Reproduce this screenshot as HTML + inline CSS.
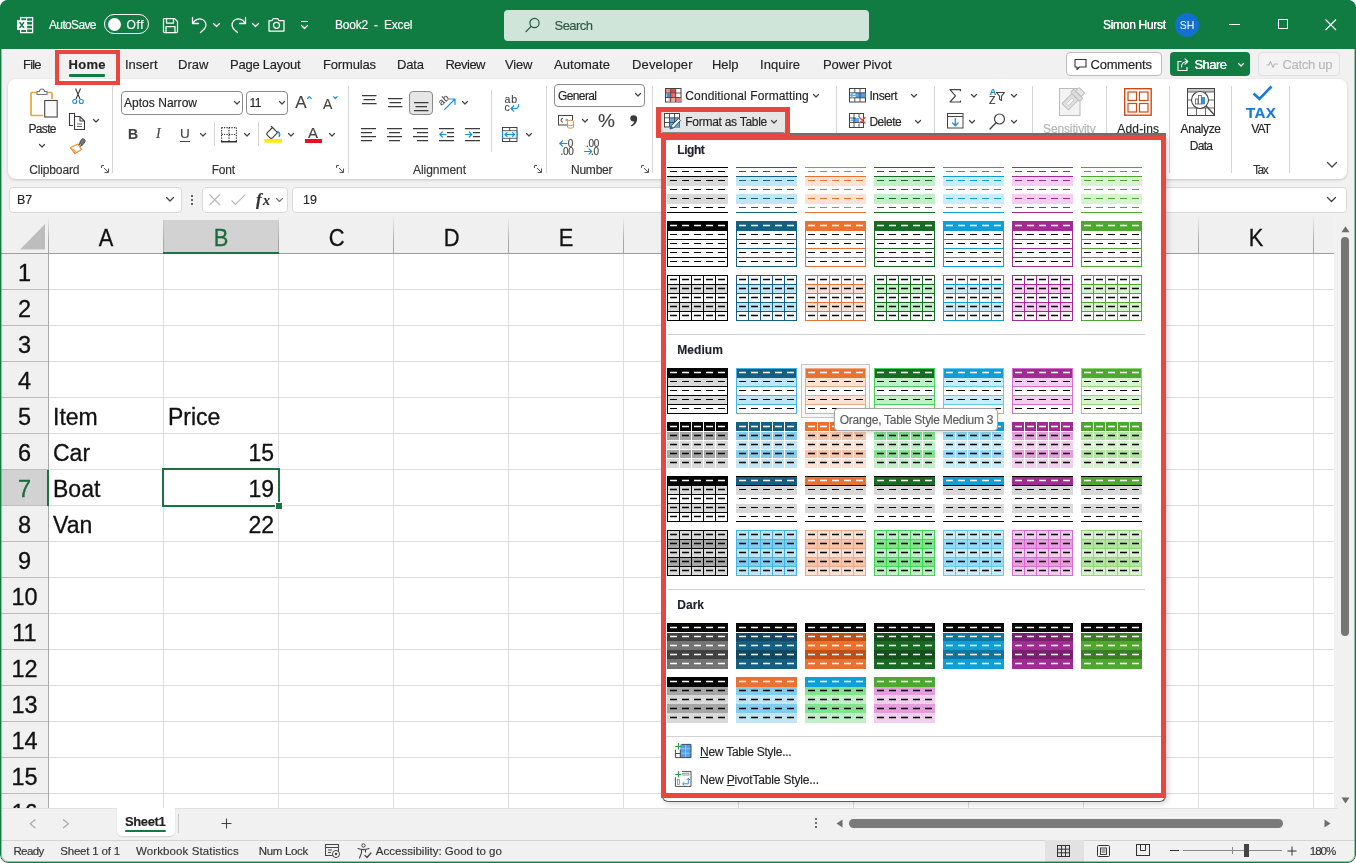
<!DOCTYPE html>
<html><head><meta charset="utf-8"><title>Excel</title><style>
*{box-sizing:border-box;margin:0;padding:0}
html,body{width:1356px;height:863px;overflow:hidden;background:#fff}
body{font-family:"Liberation Sans",sans-serif;color:#242424;position:relative;font-size:13px}
.abs{position:absolute}
#win{position:absolute;left:0;top:0;width:1356px;height:863px;background:#f1f1f1;overflow:hidden;border-radius:8px;will-change:transform}
#title{position:absolute;left:0;top:0;width:1356px;height:49px;background:#107c41}
#frame{position:absolute;left:0;top:0;width:1356px;height:863px;border-radius:8px;border:1px solid #107c41;box-shadow:inset 0 0 0 1px rgba(16,124,65,.4);pointer-events:none}
.t{position:absolute;white-space:nowrap;line-height:1}
.w{color:#fff}
#tabs .t{font-size:13.5px;top:58px;color:#242424}
#ribbon{position:absolute;left:8px;top:79px;width:1339px;height:100px;background:#fff;border-radius:8px;box-shadow:0 1px 3px rgba(0,0,0,.18)}
.gsep{position:absolute;width:1px;background:#d6d6d6;top:86px;height:87px}
.glabel{position:absolute;top:163px;font-size:11.5px;color:#333;white-space:nowrap;line-height:1}
.rt{position:absolute;font-size:12.5px;white-space:nowrap;line-height:1;color:#242424;-webkit-text-stroke:.15px}
.box{position:absolute;border:1px solid #8a8a8a;border-radius:4px;background:#fff}
svg{position:absolute;overflow:visible}
#fbar .box{border-color:#dadada}
#grid{position:absolute;left:1px;top:216px;width:1333px;height:592px;background:#fff;overflow:hidden}
.ch{position:absolute;top:4px;height:33px;width:115px;font-size:24px;text-align:center;line-height:35px;color:#111;-webkit-text-stroke:.3px}.ch span{display:inline-block;transform:scaleX(.91)}.hs{position:absolute;top:1px;width:1px;height:36px;background:linear-gradient(rgba(160,160,160,0),#a6a6a6 70%)}
.rh{position:absolute;left:0;width:47px;height:36px;background:#f0f0f0;font-size:23.5px;text-align:center;line-height:39px;color:#111;border-bottom:1px solid #bcbcbc;-webkit-text-stroke:.3px}
.vl{position:absolute;top:38px;width:1px;height:560px;background:#dedede}
.hl{position:absolute;left:48px;height:1px;width:1300px;background:#dedede}
.cell{position:absolute;font-size:23px;line-height:1;color:#111;white-space:nowrap;-webkit-text-stroke:.3px}
#menu{position:absolute;left:662px;top:136px;width:504px;height:666px;background:#fff;border:1px solid #5a5a5a;border-top:none;border-radius:0 0 6px 6px;box-shadow:2px 2px 6px rgba(0,0,0,.16)}
.red{position:absolute;border:5px solid #e8463f;pointer-events:none}
.mh{position:absolute;left:677px;font-weight:bold;font-size:12px;color:#1f1f2e;line-height:1}
.msep{position:absolute;left:668px;width:477px;height:1px;background:#d2d2d2}
</style></head><body><div id="win">
<div id="title"><svg style="left:16px;top:16px" width="18" height="18" viewBox="0 0 18 18">
<rect x="4.6" y="1.6" width="12" height="15" fill="none" stroke="#fff" stroke-width="1.3"/>
<path d="M4.6 5.4H16.6M4.6 9.1H16.6M4.6 12.8H16.6M10.6 1.6V16.6" stroke="#fff" stroke-width="1.2" fill="none"/>
<rect x="1" y="4.2" width="9.6" height="9.8" fill="#fff"/>
<path d="M3.6 6.3L8 11.9M8 6.3L3.6 11.9" stroke="#107c41" stroke-width="1.5" fill="none"/></svg><div class="rt" style="left:49px;top:19.4px;font-size:12px;letter-spacing:-0.648px;color:#fff;">AutoSave</div><div class="abs" style="left:104px;top:14px;width:45px;height:20px;border:1.3px solid #fff;border-radius:10px"></div><div class="abs" style="left:108px;top:17.5px;width:13px;height:13px;border-radius:7px;background:#fff"></div><div class="rt" style="left:126.5px;top:18.9px;font-size:12px;letter-spacing:0.607px;color:#fff;">Off</div><svg style="left:161.5px;top:16.5px" width="17" height="17" viewBox="0 0 17 17"><path d="M1.5 2.5a1 1 0 0 1 1-1h10l3 3v10a1 1 0 0 1-1 1h-12a1 1 0 0 1-1-1z M4.5 1.5v4.5h7v-4.5 M4 15.5v-6h9v6" fill="none" stroke="#fff" stroke-width="1.25" stroke-linejoin="round"/></svg><svg style="left:191px;top:16px" width="17" height="18" viewBox="0 0 17 18"><path d="M1.5 1.5V7.5H7.5 M2 7C4 3.5 8 2 11.5 3.5c3.5 1.6 4.6 6 2.2 9L9.5 16.5" fill="none" stroke="#fff" stroke-width="1.3" stroke-linecap="round" stroke-linejoin="round"/></svg><svg style="left:212.5px;top:23px" width="7" height="4"><path d="M0.5 0.5L3.5 3.5L6.5 0.5" fill="none" stroke="#fff" stroke-width="1.3" stroke-linecap="round" stroke-linejoin="round"/></svg><svg style="left:230px;top:16px" width="17" height="18" viewBox="0 0 17 18"><path d="M15.5 1.5V7.5H9.5 M15 7C13 3.5 9 2 5.5 3.5c-3.5 1.6-4.6 6-2.2 9L7.5 16.5" fill="none" stroke="#fff" stroke-width="1.3" stroke-linecap="round" stroke-linejoin="round"/></svg><svg style="left:251.5px;top:23px" width="7" height="4"><path d="M0.5 0.5L3.5 3.5L6.5 0.5" fill="none" stroke="#fff" stroke-width="1.3" stroke-linecap="round" stroke-linejoin="round"/></svg><svg style="left:268px;top:17px" width="17" height="15" viewBox="0 0 17 15"><path d="M1 3.5h3l1.2-2h4.5l1.2 2H16v10.5H1z" fill="none" stroke="#fff" stroke-width="1.25" stroke-linejoin="round"/><circle cx="8.5" cy="8.3" r="3" fill="none" stroke="#fff" stroke-width="1.25"/></svg><div class="abs" style="left:301px;top:21px;width:7px;height:1.3px;background:#fff"></div><svg style="left:301px;top:25px" width="7" height="4"><path d="M0.5 0.5L3.5 3.5L6.5 0.5" fill="none" stroke="#fff" stroke-width="1.3" stroke-linecap="round" stroke-linejoin="round"/></svg><div class="rt" style="left:335px;top:19.4px;font-size:12px;letter-spacing:-0.229px;color:#fff;">Book2&nbsp; -&nbsp; Excel</div><div class="abs" style="left:504px;top:10px;width:365px;height:31px;border-radius:4px;background:#cfe5d9"></div><svg style="left:525px;top:17px" width="16" height="16" viewBox="0 0 16 16"><circle cx="9.5" cy="6" r="4.6" fill="none" stroke="#2a5a3f" stroke-width="1.2"/><path d="M6.2 9.4L1 14.6" stroke="#2a5a3f" stroke-width="1.3" stroke-linecap="round"/></svg><div class="rt" style="left:554.5px;top:18.5px;font-size:13px;letter-spacing:-0.538px;color:#2f5a42;">Search</div><div class="rt" style="left:1103px;top:19.4px;font-size:12px;letter-spacing:-0.302px;color:#fff;text-shadow:0 0 .4px #fff;">Simon Hurst</div><div class="abs" style="left:1175px;top:13px;width:24px;height:24px;border-radius:12px;background:#1270d3;color:#fff;font-size:10.5px;text-align:center;line-height:24px">SH</div><div class="abs" style="left:1229px;top:24px;width:11px;height:1px;background:#fff"></div><div class="abs" style="left:1278px;top:19px;width:10px;height:10px;border:1px solid #fff"></div><svg style="left:1325px;top:19px" width="12" height="12"><path d="M0.5 0.5L11 11M11 0.5L0.5 11" stroke="#fff" stroke-width="1.1"/></svg></div>
<div id="tabs"><div class="rt" style="left:23px;top:58.4px;font-size:13px;letter-spacing:-0.815px;">File</div><div class="rt" style="left:68.5px;top:58.4px;font-size:13px;letter-spacing:0.294px;font-weight:bold;">Home</div><div class="rt" style="left:125px;top:58.4px;font-size:13px;letter-spacing:-0.003px;">Insert</div><div class="rt" style="left:178px;top:58.4px;font-size:13px;letter-spacing:0.055px;">Draw</div><div class="rt" style="left:230px;top:58.4px;font-size:13px;letter-spacing:-0.25px;">Page Layout</div><div class="rt" style="left:323px;top:58.4px;font-size:13px;letter-spacing:-0.168px;">Formulas</div><div class="rt" style="left:397px;top:58.4px;font-size:13px;letter-spacing:-0.153px;">Data</div><div class="rt" style="left:445.5px;top:58.4px;font-size:13px;letter-spacing:-0.524px;">Review</div><div class="rt" style="left:505px;top:58.4px;font-size:13px;letter-spacing:-0.147px;">View</div><div class="rt" style="left:554px;top:58.4px;font-size:13px;letter-spacing:0.051px;">Automate</div><div class="rt" style="left:632px;top:58.4px;font-size:13px;letter-spacing:0.156px;">Developer</div><div class="rt" style="left:712px;top:58.4px;font-size:13px;letter-spacing:-0.078px;">Help</div><div class="rt" style="left:760px;top:58.4px;font-size:13px;letter-spacing:0.042px;">Inquire</div><div class="rt" style="left:823px;top:58.4px;font-size:13px;letter-spacing:-0.086px;">Power Pivot</div><div class="abs" style="left:69px;top:74px;width:36px;height:2.5px;border-radius:1px;background:#107c41"></div><div class="abs" style="left:1066px;top:52px;width:96px;height:24px;border:1px solid #bdbdbd;border-radius:4px;background:#fff"></div><svg style="left:1074px;top:58px" width="13" height="13" viewBox="0 0 13 13"><path d="M1 1.5h11v7.5h-6.5l-2.5 2.5v-2.5h-2z" fill="none" stroke="#333" stroke-width="1.1" stroke-linejoin="round"/></svg><div class="rt" style="left:1090.5px;top:58.4px;font-size:13px;letter-spacing:-0.193px;">Comments</div><div class="abs" style="left:1170px;top:52px;width:80px;height:24px;border-radius:4px;background:#107c41"></div><svg style="left:1177px;top:58px" width="13" height="13" viewBox="0 0 13 13"><path d="M4.5 3.5h-3.5v9h9v-3.5" fill="none" stroke="#fff" stroke-width="1.1"/><path d="M4.5 9c0-3.5 2-5.5 6-5.5 M8 0.8l2.8 2.7-2.8 2.7" fill="none" stroke="#fff" stroke-width="1.1" stroke-linejoin="round" stroke-linecap="round"/></svg><div class="rt" style="left:1194.5px;top:58.4px;font-size:13px;letter-spacing:-0.547px;color:#fff;text-shadow:0 0 .4px #fff;">Share</div><svg style="left:1238px;top:63px" width="6" height="3.5"><path d="M0.5 0.5L3 3L5.5 0.5" fill="none" stroke="#fff" stroke-width="1.2" stroke-linecap="round" stroke-linejoin="round"/></svg><div class="abs" style="left:1258px;top:52px;width:82px;height:24px;border:1px solid #e0e0e0;border-radius:4px;background:#f3f3f3"></div><svg style="left:1266px;top:60px" width="13" height="9" viewBox="0 0 13 9"><path d="M0.5 5h2.5l1.5-3.5 2.5 6 1.5-3.5h3.5" fill="none" stroke="#b8b8b8" stroke-width="1.1" stroke-linejoin="round"/></svg><div class="rt" style="left:1282.5px;top:58.4px;font-size:13px;letter-spacing:-0.29px;color:#b9b9b9;">Catch up</div></div>
<div id="ribbon"></div>
<svg style="left:30px;top:88px" width="28" height="32" viewBox="0 0 28 32"><path d="M8 4.5H2a1 1 0 0 0-1 1V26.5a1 1 0 0 0 1 1H13 M16 4.5h5a1 1 0 0 1 1 1V11" fill="none" stroke="#eaa242" stroke-width="1.7" /><path d="M7 6.5v-3h2.5a2.5 2.5 0 0 1 5 0h2.5v3z" fill="#fff" stroke="#777" stroke-width="1.1" /><rect x="14.7" y="12.5" width="12.5" height="16.5" fill="#fafafa" stroke="#444" stroke-width="1.1"/></svg><div class="rt" style="left:28.5px;top:122.9px;font-size:12px;letter-spacing:-0.671px;">Paste</div><svg style="left:38.5px;top:143.5px" width="6" height="3.5"><path d="M0.5 0.5L3 3L5.5 0.5" fill="none" stroke="#444" stroke-width="1.2" stroke-linecap="round" stroke-linejoin="round"/></svg><svg style="left:71.5px;top:87.5px" width="11" height="15.5" viewBox="0 0 11 15.5"><path d="M3.5 0.5L8 11 M8.5 0.5L4 11" fill="none" stroke="#3b3b3b" stroke-width="1.1" /><circle cx="2.7" cy="13.5" r="2" fill="none" stroke="#1e8fd5" stroke-width="1.1"/><circle cx="9.3" cy="13.5" r="2" fill="none" stroke="#1e8fd5" stroke-width="1.1"/></svg><svg style="left:69px;top:113px" width="17" height="17" viewBox="0 0 17 17"><path d="M5.5 3V0.5H0.5V12.5H4" fill="none" stroke="#3b3b3b" stroke-width="1.1" /><path d="M5.5 3.5H11L15.5 8V16.5H5.5z M11 3.5V8H15.5" fill="#fff" stroke="#3b3b3b" stroke-width="1.1" /><path d="M8 11H13M8 13.5H13" fill="none" stroke="#666" stroke-width="1" /></svg><svg style="left:93px;top:119px" width="6" height="3.5"><path d="M0.5 0.5L3 3L5.5 0.5" fill="none" stroke="#444" stroke-width="1.2" stroke-linecap="round" stroke-linejoin="round"/></svg><svg style="left:69px;top:138px" width="18" height="17" viewBox="0 0 18 17"><path d="M1.5 9.5L9 6l3.5 5.5L6 15.5z" fill="#fff" stroke="#e8912d" stroke-width="1.3" stroke-linejoin="round"/><path d="M3.5 11l4 3" fill="none" stroke="#e8912d" stroke-width="1" /><path d="M9.8 6.8l2.5-2 M11 8.5l2.5-2" fill="none" stroke="#555" stroke-width="1.1" /><rect x="11.5" y="0.8" width="4" height="6" rx="1.5" transform="rotate(32 13.5 3.8)" fill="#777" stroke="#444" stroke-width="0.8"/></svg><div class="rt" style="left:29.2px;top:163.5px;font-size:12px;letter-spacing:-0.133px;color:#333;">Clipboard</div><svg style="left:101px;top:165px" width="8" height="8" viewBox="0 0 8 8"><path d="M0.5 3V0.5H3 M7.5 3.5V7.5H3.5 M3 3L7 7" fill="none" stroke="#555" stroke-width="1" /></svg><div class="gsep" style="left:112px;top:86px;height:87px"></div><div class="box" style="left:121px;top:91px;width:122px;height:24px"></div><div class="rt" style="left:124px;top:97.4px;font-size:12px;letter-spacing:0.028px;">Aptos Narrow</div><svg style="left:234px;top:101px" width="6" height="3.5"><path d="M0.5 0.5L3 3L5.5 0.5" fill="none" stroke="#444" stroke-width="1.2" stroke-linecap="round" stroke-linejoin="round"/></svg><div class="box" style="left:246px;top:91px;width:42px;height:24px"></div><div class="rt" style="left:249.5px;top:97.4px;font-size:12px;letter-spacing:-0.6px">11</div><svg style="left:279px;top:101px" width="6" height="3.5"><path d="M0.5 0.5L3 3L5.5 0.5" fill="none" stroke="#444" stroke-width="1.2" stroke-linecap="round" stroke-linejoin="round"/></svg><div class="rt" style="left:295.3px;top:93.5px;font-size:17px;color:#444">A</div><svg style="left:306.8px;top:95.7px" width="5" height="4" viewBox="0 0 5 4"><path d="M0.5 2.5L2.3 0.7L4.1 2.5" fill="none" stroke="#1e8fd5" stroke-width="1.2" stroke-linecap="round" stroke-linejoin="round"/></svg><div class="rt" style="left:323px;top:96.5px;font-size:14px;color:#444">A</div><svg style="left:332.5px;top:95.7px" width="5" height="4" viewBox="0 0 5 4"><path d="M0.5 0.7L2.3 2.5L4.1 0.7" fill="none" stroke="#1e8fd5" stroke-width="1.2" stroke-linecap="round" stroke-linejoin="round"/></svg><div class="rt" style="left:128px;top:127px;font-size:14px;font-weight:bold;color:#444">B</div><div class="rt" style="left:156px;top:127px;font-size:14px;font-style:italic;font-family:'Liberation Serif',serif;color:#444">I</div><div class="rt" style="left:180px;top:127px;font-size:13.5px;color:#444">U</div><div class="abs" style="left:180px;top:141px;width:10px;height:1px;background:#444"></div><svg style="left:200px;top:133px" width="6" height="3.5"><path d="M0.5 0.5L3 3L5.5 0.5" fill="none" stroke="#444" stroke-width="1.2" stroke-linecap="round" stroke-linejoin="round"/></svg><div class="gsep" style="left:214px;top:122px;height:24px"></div><svg style="left:220.5px;top:126.5px" width="16" height="16" viewBox="0 0 16 16"><path d="M0.6 0.6H15.4 M0.6 0.6V14 M15.4 0.6V14 M8 0.6V14 M0.6 7.5H15.4" fill="none" stroke="#333" stroke-width="1.2" stroke-dasharray="1.2 1.27"/><path d="M0 14.7H16" fill="none" stroke="#333" stroke-width="1.5" /></svg><svg style="left:244px;top:133px" width="6" height="3.5"><path d="M0.5 0.5L3 3L5.5 0.5" fill="none" stroke="#444" stroke-width="1.2" stroke-linecap="round" stroke-linejoin="round"/></svg><div class="gsep" style="left:258px;top:122px;height:24px"></div><svg style="left:264px;top:124px" width="19" height="20" viewBox="0 0 19 20"><path d="M8.5 3.5L13.5 8.7L8.5 13.8C7.7 14.6 6.7 14.6 6 13.9L3.3 11.2C2.6 10.5 2.6 9.5 3.4 8.7z M8.5 3.5L7.3 2.3" fill="#fff" stroke="#3b3b3b" stroke-width="1.1" stroke-linejoin="round" stroke-linecap="round"/><path d="M14 7.5c1.5 1.2 2 3 1.3 4.8" fill="none" stroke="#1e8fd5" stroke-width="1.5" stroke-linecap="round"/><rect x="0.3" y="15" width="17.7" height="3.7" fill="#ffeb00"/></svg><svg style="left:288px;top:133px" width="6" height="3.5"><path d="M0.5 0.5L3 3L5.5 0.5" fill="none" stroke="#444" stroke-width="1.2" stroke-linecap="round" stroke-linejoin="round"/></svg><div class="rt" style="left:308px;top:125px;font-size:15px;color:#444">A</div><div class="abs" style="left:305px;top:139px;width:17px;height:4px;background:#e81123"></div><svg style="left:329px;top:133px" width="6" height="3.5"><path d="M0.5 0.5L3 3L5.5 0.5" fill="none" stroke="#444" stroke-width="1.2" stroke-linecap="round" stroke-linejoin="round"/></svg><div class="rt" style="left:211.8px;top:163.5px;font-size:12px;letter-spacing:-0.27px;color:#333;">Font</div><svg style="left:336px;top:165px" width="8" height="8" viewBox="0 0 8 8"><path d="M0.5 3V0.5H3 M7.5 3.5V7.5H3.5 M3 3L7 7" fill="none" stroke="#555" stroke-width="1" /></svg><div class="gsep" style="left:348px;top:86px;height:87px"></div><svg style="left:361.5px;top:95px" width="14.5" height="10" viewBox="0 0 14.5 10"><rect x="0" y="0" width="14.5" height="1.25" fill="#3b3b3b"/><rect x="1.5" y="4" width="11.5" height="1.25" fill="#3b3b3b"/><rect x="0" y="8" width="14.5" height="1.25" fill="#3b3b3b"/></svg><svg style="left:387.5px;top:98px" width="14.5" height="10" viewBox="0 0 14.5 10"><rect x="0" y="0" width="14.5" height="1.25" fill="#3b3b3b"/><rect x="1.5" y="4" width="11.5" height="1.25" fill="#3b3b3b"/><rect x="0" y="8" width="14.5" height="1.25" fill="#3b3b3b"/></svg><div class="abs" style="left:409px;top:91px;width:24px;height:24px;border:1px solid #8a8a8a;border-radius:4px;background:#e6e6e6"></div><svg style="left:413.5px;top:102px" width="14.5" height="10" viewBox="0 0 14.5 10"><rect x="0" y="0" width="14.5" height="1.25" fill="#3b3b3b"/><rect x="1.5" y="4" width="11.5" height="1.25" fill="#3b3b3b"/><rect x="0" y="8" width="14.5" height="1.25" fill="#3b3b3b"/></svg><div class="rt" style="left:438px;top:95px;font-size:9.5px;color:#444;transform:rotate(-42deg);transform-origin:50% 50%;letter-spacing:0.3px">ab</div><svg style="left:444px;top:98px" width="12" height="12" viewBox="0 0 12 12"><path d="M0.7 11.3L10.5 1.5 M5.5 1H11V6.5" fill="none" stroke="#1e8fd5" stroke-width="1.2" stroke-linecap="round" stroke-linejoin="round"/></svg><svg style="left:462px;top:101px" width="6" height="3.5"><path d="M0.5 0.5L3 3L5.5 0.5" fill="none" stroke="#444" stroke-width="1.2" stroke-linecap="round" stroke-linejoin="round"/></svg><svg style="left:361px;top:128px" width="15" height="14" viewBox="0 0 15 14"><rect x="0" y="0" width="15" height="1.25" fill="#3b3b3b"/><rect x="0" y="4" width="11" height="1.25" fill="#3b3b3b"/><rect x="0" y="8" width="15" height="1.25" fill="#3b3b3b"/><rect x="0" y="12" width="11" height="1.25" fill="#3b3b3b"/></svg><svg style="left:387px;top:128px" width="15" height="14" viewBox="0 0 15 14"><rect x="0" y="0" width="15" height="1.25" fill="#3b3b3b"/><rect x="2" y="4" width="11" height="1.25" fill="#3b3b3b"/><rect x="0" y="8" width="15" height="1.25" fill="#3b3b3b"/><rect x="2" y="12" width="11" height="1.25" fill="#3b3b3b"/></svg><svg style="left:413px;top:128px" width="15" height="14" viewBox="0 0 15 14"><rect x="0" y="0" width="15" height="1.25" fill="#3b3b3b"/><rect x="4" y="4" width="11" height="1.25" fill="#3b3b3b"/><rect x="0" y="8" width="15" height="1.25" fill="#3b3b3b"/><rect x="4" y="12" width="11" height="1.25" fill="#3b3b3b"/></svg><svg style="left:439px;top:128px" width="15" height="14" viewBox="0 0 15 14"><rect x="0" y="0" width="15" height="1.25" fill="#3b3b3b"/><rect x="8" y="4" width="7" height="1.25" fill="#3b3b3b"/><rect x="8" y="8" width="7" height="1.25" fill="#3b3b3b"/><rect x="0" y="12" width="15" height="1.25" fill="#3b3b3b"/></svg><svg style="left:439px;top:131px" width="8" height="8" viewBox="0 0 8 8"><path d="M7 3.5H1 M3.3 1L0.8 3.5L3.3 6" fill="none" stroke="#1e8fd5" stroke-width="1.2" stroke-linecap="round" stroke-linejoin="round"/></svg><svg style="left:465px;top:128px" width="15" height="14" viewBox="0 0 15 14"><rect x="0" y="0" width="15" height="1.25" fill="#3b3b3b"/><rect x="8" y="4" width="7" height="1.25" fill="#3b3b3b"/><rect x="8" y="8" width="7" height="1.25" fill="#3b3b3b"/><rect x="0" y="12" width="15" height="1.25" fill="#3b3b3b"/></svg><svg style="left:465px;top:131px" width="8" height="8" viewBox="0 0 8 8"><path d="M0.5 3.5H6.5 M4.2 1L6.7 3.5L4.2 6" fill="none" stroke="#1e8fd5" stroke-width="1.2" stroke-linecap="round" stroke-linejoin="round"/></svg><div class="gsep" style="left:491px;top:90px;height:62px"></div><div class="rt" style="left:504.5px;top:93.5px;font-size:10.5px;color:#444;letter-spacing:0.8px">ab</div><div class="rt" style="left:504.5px;top:102px;font-size:10.5px;color:#444">c</div><svg style="left:509.5px;top:103.5px" width="10" height="8" viewBox="0 0 10 8"><path d="M8.5 0.5c0.5 2.5-1 4-3 4H1.2 M3.8 1.8L1 4.5L3.8 7.2" fill="none" stroke="#1e8fd5" stroke-width="1.2" stroke-linecap="round" stroke-linejoin="round"/></svg><svg style="left:502px;top:127px" width="16" height="15" viewBox="0 0 16 15"><rect x="0.5" y="0.5" width="14.5" height="14" fill="#fff" stroke="#444" stroke-width="1"/><path d="M0.5 3.8H15M0.5 11.2H15M7.7 0.5V3.8M7.7 11.2V14.5" fill="none" stroke="#444" stroke-width="1" /><rect x="1" y="4.3" width="13.5" height="6.4" fill="#dff0fc"/><path d="M0.5 3.8V11.2M15 3.8V11.2" fill="none" stroke="#1e8fd5" stroke-width="1.1" /><path d="M3.2 7.5H12.3 M5 5.6L3 7.5L5 9.4 M10.5 5.6L12.5 7.5L10.5 9.4" fill="none" stroke="#1e8fd5" stroke-width="1.1" stroke-linecap="round" stroke-linejoin="round"/></svg><svg style="left:526px;top:133px" width="6" height="3.5"><path d="M0.5 0.5L3 3L5.5 0.5" fill="none" stroke="#444" stroke-width="1.2" stroke-linecap="round" stroke-linejoin="round"/></svg><div class="rt" style="left:413px;top:163.5px;font-size:12px;letter-spacing:-0.045px;color:#333;">Alignment</div><svg style="left:534px;top:165px" width="8" height="8" viewBox="0 0 8 8"><path d="M0.5 3V0.5H3 M7.5 3.5V7.5H3.5 M3 3L7 7" fill="none" stroke="#555" stroke-width="1" /></svg><div class="gsep" style="left:546px;top:86px;height:87px"></div><div class="box" style="left:554px;top:84px;width:91px;height:23px"></div><div class="rt" style="left:558px;top:89.9px;font-size:12px;letter-spacing:-0.615px;">General</div><svg style="left:635px;top:93px" width="6" height="3.5"><path d="M0.5 0.5L3 3L5.5 0.5" fill="none" stroke="#444" stroke-width="1.2" stroke-linecap="round" stroke-linejoin="round"/></svg><svg style="left:558px;top:115px" width="18" height="15" viewBox="0 0 18 15"><rect x="0.5" y="0.5" width="14" height="9.5" fill="#fff" stroke="#444" stroke-width="1"/><path d="M5 3.2a1.6 1.6 0 1 0 0 4 M7.5 5h2.5" fill="none" stroke="#444" stroke-width="1" /><ellipse cx="12.5" cy="6.5" rx="3" ry="1.2" fill="#fff" stroke="#e8912d" stroke-width="1"/><path d="M9.5 6.5V12a3 1.2 0 0 0 6 0V6.5 M9.5 9.3a3 1.2 0 0 0 6 0" fill="#fff" stroke="#e8912d" stroke-width="1" /></svg><svg style="left:582px;top:119px" width="6" height="3.5"><path d="M0.5 0.5L3 3L5.5 0.5" fill="none" stroke="#444" stroke-width="1.2" stroke-linecap="round" stroke-linejoin="round"/></svg><div class="rt" style="left:598px;top:111px;font-size:19px;color:#444">%</div><svg style="left:630px;top:115px" width="8" height="12" viewBox="0 0 8 12"><path d="M0.2 3.6a3.5 3.5 0 1 1 7 0.2c0 3.7-2.3 6.3-5.7 7.7l-0.6-1.1c1.9-1.1 3.1-2.5 3.3-4a3.4 3.4 0 0 1-4-2.8z" fill="#3b3b3b"/></svg><div class="rt" style="left:567.8px;top:139px;font-size:10px;color:#444">0</div><div class="rt" style="left:560.5px;top:147px;font-size:10px;color:#444;letter-spacing:-0.3px">.00</div><svg style="left:558.5px;top:140px" width="9" height="7" viewBox="0 0 9 7"><path d="M8 3.5H1 M3.5 0.8L0.8 3.5L3.5 6.2" fill="none" stroke="#1e8fd5" stroke-width="1.2" stroke-linecap="round" stroke-linejoin="round"/></svg><div class="rt" style="left:586px;top:139px;font-size:10px;color:#444;letter-spacing:-0.3px">.00</div><div class="rt" style="left:591px;top:147px;font-size:10px;color:#444;letter-spacing:-0.3px">.0</div><svg style="left:584px;top:148px" width="9" height="7" viewBox="0 0 9 7"><path d="M0.5 3.5H7.5 M5 0.8L7.7 3.5L5 6.2" fill="none" stroke="#1e8fd5" stroke-width="1.2" stroke-linecap="round" stroke-linejoin="round"/></svg><div class="rt" style="left:571px;top:163.5px;font-size:12px;letter-spacing:-0.236px;color:#333;">Number</div><svg style="left:641px;top:165px" width="8" height="8" viewBox="0 0 8 8"><path d="M0.5 3V0.5H3 M7.5 3.5V7.5H3.5 M3 3L7 7" fill="none" stroke="#555" stroke-width="1" /></svg><div class="gsep" style="left:652px;top:86px;height:87px"></div>
<svg style="left:664.5px;top:88px" width="17" height="15" viewBox="0 0 17 15"><rect x="0.5" y="0.5" width="15.5" height="13.5" fill="#fff" stroke="#444" stroke-width="1"/><rect x="1" y="1" width="4.7" height="4" fill="#f28b82"/><rect x="5.7" y="1" width="5" height="4" fill="#e8453c"/><rect x="1.5" y="5.5" width="4" height="3.8" fill="#3f8fe0"/><rect x="5.7" y="5.3" width="5" height="4" fill="#ef6a60"/><rect x="3.5" y="9.7" width="7" height="4" fill="#f5a49c"/><rect x="10.7" y="9.7" width="5" height="4" fill="#ee7a70"/><path d="M0.5 5H16M0.5 9.5H16M5.7 0.5V14M10.7 0.5V14" fill="none" stroke="#444" stroke-width="0.9" /></svg><div class="rt" style="left:685.3px;top:90.4px;font-size:12px;letter-spacing:0.132px;">Conditional Formatting</div><svg style="left:813px;top:94px" width="6" height="3.5"><path d="M0.5 0.5L3 3L5.5 0.5" fill="none" stroke="#444" stroke-width="1.2" stroke-linecap="round" stroke-linejoin="round"/></svg><div class="abs" style="left:661px;top:111px;width:124px;height:22px;background:#e6e6e6;border-radius:2px;border-bottom:1px solid #8a8a8a"></div><svg style="left:664px;top:113px" width="18" height="17" viewBox="0 0 18 17"><rect x="0.5" y="0.5" width="15" height="13.5" fill="#fff" stroke="#444" stroke-width="1"/><rect x="5.5" y="5" width="10" height="9" fill="#5aa9e6"/><path d="M0.5 4.8H15.5M0.5 9.5H15.5M5.5 0.5V14M10.5 0.5V14" fill="none" stroke="#444" stroke-width="0.9" /><path d="M14.5 5.5l2 2-7 7.5-3.5 1 1.2-3.2z" fill="#e9eef3" stroke="#444" stroke-width="0.9" stroke-linejoin="round"/><path d="M6 15.8l3.3-0.8-2.2-2.2z" fill="#1e6fb8" stroke="#1e6fb8" stroke-width="0.5" /></svg><div class="rt" style="left:685.3px;top:116.4px;font-size:12px;letter-spacing:-0.273px;">Format as Table</div><svg style="left:770.5px;top:120px" width="6" height="3.5"><path d="M0.5 0.5L3 3L5.5 0.5" fill="none" stroke="#444" stroke-width="1.2" stroke-linecap="round" stroke-linejoin="round"/></svg><div class="gsep" style="left:836px;top:86px;height:87px"></div><svg style="left:849px;top:88px" width="17" height="15" viewBox="0 0 17 15"><rect x="0.5" y="0.5" width="16" height="13.5" fill="#fff" stroke="#444" stroke-width="1"/><rect x="6.5" y="4.8" width="10" height="5" fill="#4f9fe8"/><path d="M0.5 4.8H16.5M0.5 9.8H16.5M5.8 0.5V4.8M5.8 9.8V14M11 0.5V14" fill="none" stroke="#444" stroke-width="0.9" /><path d="M8.5 7.3H1.5 M3.8 5.2L1.5 7.3L3.8 9.4" fill="none" stroke="#58b0f0" stroke-width="1.3" stroke-linecap="round" stroke-linejoin="round"/></svg><div class="rt" style="left:869.4px;top:90.4px;font-size:12px;letter-spacing:-0.362px;">Insert</div><svg style="left:910.5px;top:94px" width="6" height="3.5"><path d="M0.5 0.5L3 3L5.5 0.5" fill="none" stroke="#444" stroke-width="1.2" stroke-linecap="round" stroke-linejoin="round"/></svg><svg style="left:849px;top:113px" width="18" height="16" viewBox="0 0 18 16"><rect x="0.5" y="0.5" width="14" height="14" fill="#fff" stroke="#444" stroke-width="1"/><rect x="4" y="5" width="6" height="4.5" fill="#5aa9e6"/><path d="M0.5 5H7M0.5 9.5H14.5M5 0.5V14.5M10 0.5V4M10 11V14.5" fill="none" stroke="#444" stroke-width="0.9" /><path d="M1.5 7.2H6 M4.5 5.5l1.8 1.7-1.8 1.7" fill="none" stroke="#1e8fd5" stroke-width="1" /><path d="M10.5 4.5l5.5 5.5M16 4.5l-5.5 5.5" fill="none" stroke="#e8453c" stroke-width="1.4" stroke-linecap="round"/></svg><div class="rt" style="left:869.4px;top:116.4px;font-size:12px;letter-spacing:-0.457px;">Delete</div><svg style="left:914.5px;top:120px" width="6" height="3.5"><path d="M0.5 0.5L3 3L5.5 0.5" fill="none" stroke="#444" stroke-width="1.2" stroke-linecap="round" stroke-linejoin="round"/></svg><div class="gsep" style="left:934px;top:86px;height:87px"></div><svg style="left:949px;top:88.5px" width="13" height="14" viewBox="0 0 13 14"><path d="M11.5 2.3V0.7H1L6.5 6.8L1 13H11.5V11.4" fill="none" stroke="#444" stroke-width="1.2" stroke-linejoin="round"/></svg><svg style="left:970.5px;top:94px" width="6" height="3.5"><path d="M0.5 0.5L3 3L5.5 0.5" fill="none" stroke="#444" stroke-width="1.2" stroke-linecap="round" stroke-linejoin="round"/></svg><div class="rt" style="left:989.5px;top:86.5px;font-size:9.5px;color:#1e8fd5;font-weight:bold">A</div><div class="rt" style="left:989px;top:94.5px;font-size:10.5px;color:#333">Z</div><svg style="left:996px;top:91.5px" width="9" height="9" viewBox="0 0 9 9"><path d="M0.5 0.5H8.5L5.5 4.2V8.5L3.5 7.2V4.2z" fill="none" stroke="#444" stroke-width="1.1" stroke-linejoin="round"/></svg><svg style="left:1010.5px;top:94px" width="6" height="3.5"><path d="M0.5 0.5L3 3L5.5 0.5" fill="none" stroke="#444" stroke-width="1.2" stroke-linecap="round" stroke-linejoin="round"/></svg><svg style="left:947px;top:113px" width="17" height="16" viewBox="0 0 17 16"><rect x="0.5" y="0.5" width="15.5" height="14.5" fill="#fff" stroke="#444" stroke-width="1"/><path d="M0.5 3.5H16" fill="none" stroke="#444" stroke-width="1" /><path d="M8.3 5.5V12.5 M5.5 10l2.8 2.8L11 10" fill="none" stroke="#1e8fd5" stroke-width="1.3" stroke-linecap="round" stroke-linejoin="round"/></svg><svg style="left:968.5px;top:120px" width="6" height="3.5"><path d="M0.5 0.5L3 3L5.5 0.5" fill="none" stroke="#444" stroke-width="1.2" stroke-linecap="round" stroke-linejoin="round"/></svg><svg style="left:989px;top:113px" width="17" height="17" viewBox="0 0 17 17"><circle cx="10.5" cy="6" r="5" fill="none" stroke="#444" stroke-width="1.2"/><path d="M7 9.8L1 16" fill="none" stroke="#444" stroke-width="1.4" stroke-linecap="round"/></svg><svg style="left:1010.5px;top:120px" width="6" height="3.5"><path d="M0.5 0.5L3 3L5.5 0.5" fill="none" stroke="#444" stroke-width="1.2" stroke-linecap="round" stroke-linejoin="round"/></svg><div class="gsep" style="left:1032px;top:86px;height:87px"></div><svg style="left:1059px;top:85px" width="28" height="31" viewBox="0 0 28 31"><rect x="0.5" y="3.5" width="20.5" height="27" fill="#f3f3f3" stroke="#bcbcbc" stroke-width="1"/><g transform="rotate(-45 14 14)"><rect x="3" y="9.5" width="14" height="9" rx="1" fill="#e0e0e0" stroke="#bdbdbd" stroke-width="1"/><rect x="6" y="12.5" width="8" height="3" fill="#f6f6f6" stroke="#c4c4c4" stroke-width="0.8"/><rect x="17" y="7.5" width="4.5" height="13" rx="1" fill="#dcdcdc" stroke="#bdbdbd" stroke-width="1"/><rect x="21.5" y="10" width="5" height="8" rx="1" fill="#e6e6e6" stroke="#bdbdbd" stroke-width="1"/></g></svg><div class="rt" style="left:1043px;top:123.4px;font-size:12px;letter-spacing:-0.122px;color:#b4b4b4;">Sensitivity</div><div class="gsep" style="left:1106px;top:86px;height:87px"></div><svg style="left:1124px;top:88px" width="28" height="28" viewBox="0 0 28 28"><rect x="0.7" y="0.7" width="26.5" height="26.5" fill="#fff" stroke="#d4480f" stroke-width="1.4"/><rect x="4" y="4" width="8.5" height="8.5" fill="#fff" stroke="#d4480f" stroke-width="1.2"/><rect x="4" y="15.5" width="8.5" height="8.5" fill="#fff" stroke="#d4480f" stroke-width="1.2"/><rect x="15.5" y="4" width="8.5" height="8.5" fill="#fff" stroke="#d4480f" stroke-width="1.2"/><rect x="15.5" y="15.5" width="8.5" height="8.5" fill="#fff" stroke="#d4480f" stroke-width="1.2"/></svg><div class="rt" style="left:1117.3px;top:123.4px;font-size:12px;letter-spacing:0.169px;">Add-ins</div><div class="gsep" style="left:1169px;top:86px;height:87px"></div><svg style="left:1187px;top:88px" width="29" height="29" viewBox="0 0 29 29"><rect x="0.5" y="0.5" width="27" height="27" fill="#fff" stroke="#444" stroke-width="1"/><rect x="1" y="1" width="26" height="3" fill="#c8c8c8"/><path d="M0.5 4H27.5M0.5 12H27.5M0.5 20H27.5M9.5 20V27.5M18.5 20V27.5M9.5 4V6M18.5 4V6" fill="none" stroke="#555" stroke-width="0.9" /><circle cx="13" cy="12" r="8.5" fill="#fff" stroke="#444" stroke-width="1.1"/><rect x="8.5" y="11" width="2.5" height="5" fill="#fff" stroke="#555" stroke-width="0.8"/><rect x="11.5" y="7.5" width="2.8" height="8.5" fill="#fff" stroke="#555" stroke-width="0.8"/><rect x="14.8" y="9.5" width="2.8" height="6.5" fill="#2b9be8" stroke="#1e78c0" stroke-width="0.6"/><path d="M19.2 18L27 26.5" fill="none" stroke="#444" stroke-width="1.3" /></svg><div class="rt" style="left:1180.5px;top:123.4px;font-size:12px;letter-spacing:-0.365px;">Analyze</div><div class="rt" style="left:1189.7px;top:139.9px;font-size:12px;letter-spacing:-0.682px;">Data</div><div class="gsep" style="left:1231px;top:86px;height:87px"></div><svg style="left:1252px;top:85px" width="22" height="16" viewBox="0 0 22 16"><path d="M1.5 8.5L7.5 14L19.5 1.5" fill="none" stroke="#1a78d6" stroke-width="2.6" stroke-linecap="butt" stroke-linejoin="miter"/></svg><div class="rt" style="left:1246px;top:106px;font-size:14px;font-weight:bold;color:#1a78d6;transform:scaleX(1.08);transform-origin:0 0;letter-spacing:0.3px">TAX</div><div class="rt" style="left:1251.2px;top:123.4px;font-size:12px;letter-spacing:-0.879px;">VAT</div><div class="rt" style="left:1253px;top:163.5px;font-size:12px;letter-spacing:-1.437px;color:#333;">Tax</div><div class="gsep" style="left:1289px;top:86px;height:87px"></div><svg style="left:1327px;top:162px" width="10" height="5.5"><path d="M0.5 0.5L5 5L9.5 0.5" fill="none" stroke="#444" stroke-width="1.3" stroke-linecap="round" stroke-linejoin="round"/></svg>
<div id="fbar"><div class="box" style="left:9px;top:187px;width:173px;height:26px"></div><div class="rt" style="left:17px;top:194px;font-size:12.5px">B7</div><svg style="left:166px;top:197px" width="8" height="4.5"><path d="M0.5 0.5L4 4L7.5 0.5" fill="none" stroke="#444" stroke-width="1.3" stroke-linecap="round" stroke-linejoin="round"/></svg><div class="abs" style="left:190.5px;top:194.7px;width:2.5px;height:2.5px;border-radius:1.25px;background:#333"></div><div class="abs" style="left:190.5px;top:198.7px;width:2.5px;height:2.5px;border-radius:1.25px;background:#333"></div><div class="abs" style="left:190.5px;top:202.7px;width:2.5px;height:2.5px;border-radius:1.25px;background:#333"></div><div class="box" style="left:202px;top:187px;width:86px;height:26px"></div><svg style="left:209px;top:194px" width="12" height="12" viewBox="0 0 12 12"><path d="M0.5 0.5L11 11M11 0.5L0.5 11" fill="none" stroke="#b8b8b8" stroke-width="1.1" /></svg><svg style="left:231px;top:194px" width="15" height="12" viewBox="0 0 15 12"><path d="M0.5 6.5L4.5 10.5L14 0.8" fill="none" stroke="#b8b8b8" stroke-width="1.1" /></svg><div class="rt" style="left:256px;top:191px;font-size:17px;font-family:'Liberation Serif',serif;color:#333;font-weight:bold"><i>f</i></div><div class="rt" style="left:263px;top:194px;font-size:14px;font-family:'Liberation Serif',serif;color:#333;font-weight:bold"><i>x</i></div><svg style="left:276px;top:198px" width="7" height="4"><path d="M0.5 0.5L3.5 3.5L6.5 0.5" fill="none" stroke="#777" stroke-width="1.1" stroke-linecap="round" stroke-linejoin="round"/></svg><div class="box" style="left:292px;top:187px;width:1055px;height:26px"></div><div class="rt" style="left:303px;top:194px;font-size:12.5px">19</div><svg style="left:1327px;top:197px" width="9" height="5"><path d="M0.5 0.5L4.5 4.5L8.5 0.5" fill="none" stroke="#444" stroke-width="1.3" stroke-linecap="round" stroke-linejoin="round"/></svg></div>
<div id="grid"><div class="abs" style="left:0;top:0;width:1333px;height:37px;background:#f0f0f0"></div><svg style="left:19px;top:8px" width="25" height="26"><path d="M25 0V25.5H0z" fill="#bdbdbd"/></svg><div class="abs" style="left:162px;top:4px;width:116px;height:33px;background:#d2d2d2"></div><div class="ch" style="left:48px;"><span>A</span></div><div class="ch" style="left:163px;color:#1a6b3c;"><span>B</span></div><div class="ch" style="left:278px;"><span>C</span></div><div class="ch" style="left:393px;"><span>D</span></div><div class="ch" style="left:508px;"><span>E</span></div><div class="ch" style="left:623px;"><span>F</span></div><div class="ch" style="left:738px;"><span>G</span></div><div class="ch" style="left:853px;"><span>H</span></div><div class="ch" style="left:968px;"><span>I</span></div><div class="ch" style="left:1083px;"><span>J</span></div><div class="ch" style="left:1198px;"><span>K</span></div><div class="hs" style="left:47px"></div><div class="hs" style="left:162px"></div><div class="hs" style="left:277px"></div><div class="hs" style="left:392px"></div><div class="hs" style="left:507px"></div><div class="hs" style="left:622px"></div><div class="hs" style="left:737px"></div><div class="hs" style="left:852px"></div><div class="hs" style="left:967px"></div><div class="hs" style="left:1082px"></div><div class="hs" style="left:1197px"></div><div class="hs" style="left:1312px"></div><div class="abs" style="left:0;top:37px;width:1333px;height:1px;background:#9e9e9e"></div><div class="abs" style="left:162px;top:36px;width:116px;height:2px;background:#1a7343"></div><div class="rh" style="top:38px;">1</div><div class="rh" style="top:74px;">2</div><div class="rh" style="top:110px;">3</div><div class="rh" style="top:146px;">4</div><div class="rh" style="top:182px;">5</div><div class="rh" style="top:218px;">6</div><div class="rh" style="top:254px;background:#d2d2d2;color:#1a6b3c;">7</div><div class="rh" style="top:290px;">8</div><div class="rh" style="top:326px;">9</div><div class="rh" style="top:362px;">10</div><div class="rh" style="top:398px;">11</div><div class="rh" style="top:434px;">12</div><div class="rh" style="top:470px;">13</div><div class="rh" style="top:506px;">14</div><div class="rh" style="top:542px;">15</div><div class="rh" style="top:578px;">16</div><div class="abs" style="left:47px;top:38px;width:1px;height:560px;background:#a8a8a8"></div><div class="abs" style="left:46px;top:254px;width:2px;height:36px;background:#1a7343"></div><div class="vl" style="left:162px"></div><div class="vl" style="left:277px"></div><div class="vl" style="left:392px"></div><div class="vl" style="left:507px"></div><div class="vl" style="left:622px"></div><div class="vl" style="left:737px"></div><div class="vl" style="left:852px"></div><div class="vl" style="left:967px"></div><div class="vl" style="left:1082px"></div><div class="vl" style="left:1197px"></div><div class="vl" style="left:1312px"></div><div class="hl" style="top:73px"></div><div class="hl" style="top:109px"></div><div class="hl" style="top:145px"></div><div class="hl" style="top:181px"></div><div class="hl" style="top:217px"></div><div class="hl" style="top:253px"></div><div class="hl" style="top:289px"></div><div class="hl" style="top:325px"></div><div class="hl" style="top:361px"></div><div class="hl" style="top:397px"></div><div class="hl" style="top:433px"></div><div class="hl" style="top:469px"></div><div class="hl" style="top:505px"></div><div class="hl" style="top:541px"></div><div class="hl" style="top:577px"></div><div class="hl" style="top:613px"></div><div class="cell" style="left:52px;top:190px">Item</div><div class="cell" style="left:167px;top:190px">Price</div><div class="cell" style="left:52px;top:226px">Car</div><div class="cell" style="right:1060px;top:226px">15</div><div class="cell" style="left:52px;top:262px">Boat</div><div class="cell" style="right:1060px;top:262px">19</div><div class="cell" style="left:52px;top:298px">Van</div><div class="cell" style="right:1060px;top:298px">22</div><div class="abs" style="left:161px;top:252px;width:118px;height:39px;border:2px solid #1a7343"></div><div class="abs" style="left:274px;top:286px;width:8px;height:8px;background:#1a7343;border:1px solid #fff"></div></div><svg style="left:1340.5px;top:225.5px" width="9" height="7"><path d="M4.5 0.3L8.5 6.3H0.5z" fill="#6e6e6e"/></svg><svg style="left:1340.5px;top:797px" width="9" height="7"><path d="M4.5 6.5L8.5 0.5H0.5z" fill="#6e6e6e"/></svg><div class="abs" style="left:1340.5px;top:237px;width:8.5px;height:399px;border-radius:4px;background:#767676"></div>
<div class="abs" style="left:1px;top:808px;width:1354px;height:32px;background:#f1f1f1"></div><div class="abs" style="left:1px;top:808px;width:1337px;height:1px;background:#e0e0e0"></div><svg style="left:29px;top:818.5px" width="8" height="10" viewBox="0 0 8 10"><path d="M6 0.8L1.2 4.8L6 8.8" fill="none" stroke="#ababab" stroke-width="1.3" stroke-linecap="round" stroke-linejoin="round"/></svg><svg style="left:62px;top:818.5px" width="8" height="10" viewBox="0 0 8 10"><path d="M1.5 0.8L6.3 4.8L1.5 8.8" fill="none" stroke="#ababab" stroke-width="1.3" stroke-linecap="round" stroke-linejoin="round"/></svg><div class="abs" style="left:117px;top:808px;width:58px;height:28px;background:#fff;border-radius:0 0 5px 5px;box-shadow:0 1px 1.5px rgba(0,0,0,.12)"></div><div class="rt" style="left:125px;top:815px;font-size:13px;font-weight:bold;letter-spacing:-0.4px;color:#222">Sheet1</div><div class="abs" style="left:125px;top:830px;width:41px;height:2px;background:#107c41;border-radius:1px"></div><div class="abs" style="left:178px;top:814px;width:1px;height:19px;background:#c8c8c8"></div><svg style="left:221px;top:818px" width="11" height="11" viewBox="0 0 11 11"><path d="M5.5 0.5V10.5M0.5 5.5H10.5" fill="none" stroke="#444" stroke-width="1.1" /></svg><div class="abs" style="left:815px;top:818px;width:2px;height:2px;border-radius:1px;background:#444"></div><div class="abs" style="left:815px;top:822px;width:2px;height:2px;border-radius:1px;background:#444"></div><div class="abs" style="left:815px;top:826px;width:2px;height:2px;border-radius:1px;background:#444"></div><svg style="left:836px;top:819px" width="7" height="9"><path d="M0.5 4.5L6.5 0.5V8.5z" fill="#6e6e6e"/></svg><svg style="left:1324px;top:819px" width="7" height="9"><path d="M6.5 4.5L0.5 0.5V8.5z" fill="#6e6e6e"/></svg><div class="abs" style="left:849px;top:819px;width:434px;height:9px;border-radius:4.5px;background:#7a7a7a"></div><div class="abs" style="left:1px;top:840px;width:1354px;height:1px;background:#d4d4d4"></div><div class="rt" style="left:13.4px;top:846px;font-size:11.5px;letter-spacing:-0.585px;color:#333;">Ready</div><div class="rt" style="left:60.2px;top:846px;font-size:11.5px;letter-spacing:-0.184px;color:#333;">Sheet 1 of 1</div><div class="rt" style="left:136.1px;top:846px;font-size:11.5px;letter-spacing:0.102px;color:#333;">Workbook Statistics</div><div class="rt" style="left:258.8px;top:846px;font-size:11.5px;letter-spacing:-0.338px;color:#333;">Num Lock</div><svg style="left:325px;top:844px" width="16" height="15" viewBox="0 0 16 15"><rect x="0.5" y="0.5" width="13" height="11" fill="none" stroke="#444" stroke-width="1"/><path d="M0.5 3.5H13.5M3 6H7M3 8.5H6" fill="none" stroke="#444" stroke-width="1" /><circle cx="11" cy="10" r="3.5" fill="#fff" stroke="#444" stroke-width="1"/><circle cx="11" cy="10" r="1.3" fill="#444"/></svg><svg style="left:357px;top:843px" width="16" height="16" viewBox="0 0 16 16"><circle cx="6.5" cy="2.5" r="1.7" fill="none" stroke="#444" stroke-width="1"/><path d="M1 5.5c3 1.2 8 1.2 11 0 M4.5 6.5V10L2.5 15 M8.5 6.5V9" fill="none" stroke="#444" stroke-width="1.1" stroke-linecap="round"/><path d="M8 12.5l2 2 4-4.5" fill="none" stroke="#444" stroke-width="1.2" stroke-linecap="round" stroke-linejoin="round"/></svg><div class="rt" style="left:375.8px;top:846px;font-size:11.5px;letter-spacing:0.003px;color:#333;">Accessibility: Good to go</div><div class="abs" style="left:1045px;top:840px;width:39px;height:22px;background:#e2e2e2"></div><svg style="left:1057px;top:845px" width="13" height="12" viewBox="0 0 13 12"><rect x="0.5" y="0.5" width="12" height="11" fill="none" stroke="#333" stroke-width="1"/><path d="M0.5 4.2H12.5M0.5 7.8H12.5M4.5 0.5V11.5M8.5 0.5V11.5" fill="none" stroke="#333" stroke-width="1" /></svg><svg style="left:1097px;top:845px" width="13" height="12" viewBox="0 0 13 12"><rect x="0.5" y="0.5" width="12" height="11" rx="1" fill="none" stroke="#333" stroke-width="1"/><rect x="3.5" y="3" width="6" height="6.5" fill="none" stroke="#333" stroke-width="0.9"/><path d="M4.5 5H8.5M4.5 7H8.5" fill="none" stroke="#333" stroke-width="0.8" /></svg><svg style="left:1136px;top:844px" width="14" height="13" viewBox="0 0 14 13"><rect x="0.5" y="0.5" width="13" height="11" fill="none" stroke="#333" stroke-width="1"/><path d="M4.5 0.5V6.5H9.5V0.5" fill="none" stroke="#333" stroke-width="1" /></svg><div class="abs" style="left:1170px;top:850px;width:9px;height:1px;background:#333"></div><div class="abs" style="left:1183px;top:850px;width:99px;height:1px;background:#8a8a8a"></div><div class="abs" style="left:1232px;top:847px;width:1px;height:7px;background:#8a8a8a"></div><div class="abs" style="left:1244px;top:844px;width:5px;height:13px;background:#444"></div><svg style="left:1287px;top:846px" width="10" height="10" viewBox="0 0 10 10"><path d="M5 0.5V9.5M0.5 5H9.5" fill="none" stroke="#333" stroke-width="1" /></svg><div class="rt" style="left:1309.7px;top:846px;font-size:11.5px;letter-spacing:-0.937px;color:#333;">180%</div>
<div id="menu"></div><div class="abs" style="left:662px;top:133px;width:504px;height:2px;background:#6e6e6e"></div><div class="rt" style="left:677.3px;top:143.7px;font-size:12px;letter-spacing:-0.455px;font-weight:bold;color:#1f1f2e;">Light</div><div class="rt" style="left:677.3px;top:343.7px;font-size:12px;letter-spacing:0.033px;font-weight:bold;color:#1f1f2e;">Medium</div><div class="rt" style="left:677.3px;top:598.7px;font-size:12px;letter-spacing:0.006px;font-weight:bold;color:#1f1f2e;">Dark</div><div class="msep" style="top:334px"></div><div class="msep" style="top:589px"></div><div class="msep" style="top:736px;left:666px;width:495px"></div><div class="abs" style="left:801px;top:364px;width:69px;height:54px;border:1px solid #c6c6c6;background:#f6f6f6"></div><svg style="left:667px;top:167px;background:#fff" width="61" height="46" viewBox="0 0 61 46" shape-rendering="crispEdges"><rect x="0" y="10" width="61" height="9" fill="#d9d9d9"/><rect x="0" y="27" width="61" height="10" fill="#d9d9d9"/><rect x="0" y="0" width="61" height="1" fill="#000000"/><rect x="0" y="9" width="61" height="1" fill="#000000"/><rect x="0" y="45" width="61" height="1" fill="#000000"/><path d="M3 4.5H58" stroke="#000" stroke-width="1.2" stroke-dasharray="7 5" shape-rendering="auto"/><path d="M3 13.5H58" stroke="#000" stroke-width="1.2" stroke-dasharray="7 5" shape-rendering="auto"/><path d="M3 22.5H58" stroke="#000" stroke-width="1.2" stroke-dasharray="7 5" shape-rendering="auto"/><path d="M3 31.5H58" stroke="#000" stroke-width="1.2" stroke-dasharray="7 5" shape-rendering="auto"/><path d="M3 40.5H58" stroke="#000" stroke-width="1.2" stroke-dasharray="7 5" shape-rendering="auto"/></svg>
<svg style="left:736px;top:167px;background:#fff" width="61" height="46" viewBox="0 0 61 46" shape-rendering="crispEdges"><rect x="0" y="10" width="61" height="9" fill="#c0e6f5"/><rect x="0" y="27" width="61" height="10" fill="#c0e6f5"/><rect x="0" y="0" width="61" height="1" fill="#156082"/><rect x="0" y="9" width="61" height="1" fill="#156082"/><rect x="0" y="45" width="61" height="1" fill="#156082"/><path d="M3 4.5H58" stroke="#156082" stroke-width="1.2" stroke-dasharray="7 5" shape-rendering="auto"/><path d="M3 13.5H58" stroke="#156082" stroke-width="1.2" stroke-dasharray="7 5" shape-rendering="auto"/><path d="M3 22.5H58" stroke="#156082" stroke-width="1.2" stroke-dasharray="7 5" shape-rendering="auto"/><path d="M3 31.5H58" stroke="#156082" stroke-width="1.2" stroke-dasharray="7 5" shape-rendering="auto"/><path d="M3 40.5H58" stroke="#156082" stroke-width="1.2" stroke-dasharray="7 5" shape-rendering="auto"/></svg>
<svg style="left:805px;top:167px;background:#fff" width="61" height="46" viewBox="0 0 61 46" shape-rendering="crispEdges"><rect x="0" y="10" width="61" height="9" fill="#fbe2d5"/><rect x="0" y="27" width="61" height="10" fill="#fbe2d5"/><rect x="0" y="0" width="61" height="1" fill="#e97132"/><rect x="0" y="9" width="61" height="1" fill="#e97132"/><rect x="0" y="45" width="61" height="1" fill="#e97132"/><path d="M3 4.5H58" stroke="#e97132" stroke-width="1.2" stroke-dasharray="7 5" shape-rendering="auto"/><path d="M3 13.5H58" stroke="#e97132" stroke-width="1.2" stroke-dasharray="7 5" shape-rendering="auto"/><path d="M3 22.5H58" stroke="#e97132" stroke-width="1.2" stroke-dasharray="7 5" shape-rendering="auto"/><path d="M3 31.5H58" stroke="#e97132" stroke-width="1.2" stroke-dasharray="7 5" shape-rendering="auto"/><path d="M3 40.5H58" stroke="#e97132" stroke-width="1.2" stroke-dasharray="7 5" shape-rendering="auto"/></svg>
<svg style="left:874px;top:167px;background:#fff" width="61" height="46" viewBox="0 0 61 46" shape-rendering="crispEdges"><rect x="0" y="10" width="61" height="9" fill="#c1f0c8"/><rect x="0" y="27" width="61" height="10" fill="#c1f0c8"/><rect x="0" y="0" width="61" height="1" fill="#196b24"/><rect x="0" y="9" width="61" height="1" fill="#196b24"/><rect x="0" y="45" width="61" height="1" fill="#196b24"/><path d="M3 4.5H58" stroke="#196b24" stroke-width="1.2" stroke-dasharray="7 5" shape-rendering="auto"/><path d="M3 13.5H58" stroke="#196b24" stroke-width="1.2" stroke-dasharray="7 5" shape-rendering="auto"/><path d="M3 22.5H58" stroke="#196b24" stroke-width="1.2" stroke-dasharray="7 5" shape-rendering="auto"/><path d="M3 31.5H58" stroke="#196b24" stroke-width="1.2" stroke-dasharray="7 5" shape-rendering="auto"/><path d="M3 40.5H58" stroke="#196b24" stroke-width="1.2" stroke-dasharray="7 5" shape-rendering="auto"/></svg>
<svg style="left:943px;top:167px;background:#fff" width="61" height="46" viewBox="0 0 61 46" shape-rendering="crispEdges"><rect x="0" y="10" width="61" height="9" fill="#caedfb"/><rect x="0" y="27" width="61" height="10" fill="#caedfb"/><rect x="0" y="0" width="61" height="1" fill="#0f9ed5"/><rect x="0" y="9" width="61" height="1" fill="#0f9ed5"/><rect x="0" y="45" width="61" height="1" fill="#0f9ed5"/><path d="M3 4.5H58" stroke="#0f9ed5" stroke-width="1.2" stroke-dasharray="7 5" shape-rendering="auto"/><path d="M3 13.5H58" stroke="#0f9ed5" stroke-width="1.2" stroke-dasharray="7 5" shape-rendering="auto"/><path d="M3 22.5H58" stroke="#0f9ed5" stroke-width="1.2" stroke-dasharray="7 5" shape-rendering="auto"/><path d="M3 31.5H58" stroke="#0f9ed5" stroke-width="1.2" stroke-dasharray="7 5" shape-rendering="auto"/><path d="M3 40.5H58" stroke="#0f9ed5" stroke-width="1.2" stroke-dasharray="7 5" shape-rendering="auto"/></svg>
<svg style="left:1012px;top:167px;background:#fff" width="61" height="46" viewBox="0 0 61 46" shape-rendering="crispEdges"><rect x="0" y="10" width="61" height="9" fill="#f2ceef"/><rect x="0" y="27" width="61" height="10" fill="#f2ceef"/><rect x="0" y="0" width="61" height="1" fill="#a02b93"/><rect x="0" y="9" width="61" height="1" fill="#a02b93"/><rect x="0" y="45" width="61" height="1" fill="#a02b93"/><path d="M3 4.5H58" stroke="#a02b93" stroke-width="1.2" stroke-dasharray="7 5" shape-rendering="auto"/><path d="M3 13.5H58" stroke="#a02b93" stroke-width="1.2" stroke-dasharray="7 5" shape-rendering="auto"/><path d="M3 22.5H58" stroke="#a02b93" stroke-width="1.2" stroke-dasharray="7 5" shape-rendering="auto"/><path d="M3 31.5H58" stroke="#a02b93" stroke-width="1.2" stroke-dasharray="7 5" shape-rendering="auto"/><path d="M3 40.5H58" stroke="#a02b93" stroke-width="1.2" stroke-dasharray="7 5" shape-rendering="auto"/></svg>
<svg style="left:1081px;top:167px;background:#fff" width="61" height="46" viewBox="0 0 61 46" shape-rendering="crispEdges"><rect x="0" y="10" width="61" height="9" fill="#d9f2d0"/><rect x="0" y="27" width="61" height="10" fill="#d9f2d0"/><rect x="0" y="0" width="61" height="1" fill="#4ea72e"/><rect x="0" y="9" width="61" height="1" fill="#4ea72e"/><rect x="0" y="45" width="61" height="1" fill="#4ea72e"/><path d="M3 4.5H58" stroke="#4ea72e" stroke-width="1.2" stroke-dasharray="7 5" shape-rendering="auto"/><path d="M3 13.5H58" stroke="#4ea72e" stroke-width="1.2" stroke-dasharray="7 5" shape-rendering="auto"/><path d="M3 22.5H58" stroke="#4ea72e" stroke-width="1.2" stroke-dasharray="7 5" shape-rendering="auto"/><path d="M3 31.5H58" stroke="#4ea72e" stroke-width="1.2" stroke-dasharray="7 5" shape-rendering="auto"/><path d="M3 40.5H58" stroke="#4ea72e" stroke-width="1.2" stroke-dasharray="7 5" shape-rendering="auto"/></svg>
<svg style="left:667px;top:221px;background:#fff" width="61" height="46" viewBox="0 0 61 46" shape-rendering="crispEdges"><rect x="0" y="0" width="61" height="10" fill="#000000"/><rect x="0" y="18" width="61" height="1" fill="#000000"/><rect x="0" y="27" width="61" height="1" fill="#000000"/><rect x="0" y="36" width="61" height="1" fill="#000000"/><rect x="0" y="45" width="61" height="1" fill="#000000"/><rect x="0" y="0" width="1" height="46" fill="#000000"/><rect x="60" y="0" width="1" height="46" fill="#000000"/><path d="M3 4.5H58" stroke="#fff" stroke-width="1.5" stroke-dasharray="7 5" shape-rendering="auto"/><path d="M3 13.5H58" stroke="#000" stroke-width="1.2" stroke-dasharray="7 5" shape-rendering="auto"/><path d="M3 22.5H58" stroke="#000" stroke-width="1.2" stroke-dasharray="7 5" shape-rendering="auto"/><path d="M3 31.5H58" stroke="#000" stroke-width="1.2" stroke-dasharray="7 5" shape-rendering="auto"/><path d="M3 40.5H58" stroke="#000" stroke-width="1.2" stroke-dasharray="7 5" shape-rendering="auto"/></svg>
<svg style="left:736px;top:221px;background:#fff" width="61" height="46" viewBox="0 0 61 46" shape-rendering="crispEdges"><rect x="0" y="0" width="61" height="10" fill="#156082"/><rect x="0" y="18" width="61" height="1" fill="#156082"/><rect x="0" y="27" width="61" height="1" fill="#156082"/><rect x="0" y="36" width="61" height="1" fill="#156082"/><rect x="0" y="45" width="61" height="1" fill="#156082"/><rect x="0" y="0" width="1" height="46" fill="#156082"/><rect x="60" y="0" width="1" height="46" fill="#156082"/><path d="M3 4.5H58" stroke="#fff" stroke-width="1.5" stroke-dasharray="7 5" shape-rendering="auto"/><path d="M3 13.5H58" stroke="#000" stroke-width="1.2" stroke-dasharray="7 5" shape-rendering="auto"/><path d="M3 22.5H58" stroke="#000" stroke-width="1.2" stroke-dasharray="7 5" shape-rendering="auto"/><path d="M3 31.5H58" stroke="#000" stroke-width="1.2" stroke-dasharray="7 5" shape-rendering="auto"/><path d="M3 40.5H58" stroke="#000" stroke-width="1.2" stroke-dasharray="7 5" shape-rendering="auto"/></svg>
<svg style="left:805px;top:221px;background:#fff" width="61" height="46" viewBox="0 0 61 46" shape-rendering="crispEdges"><rect x="0" y="0" width="61" height="10" fill="#e97132"/><rect x="0" y="18" width="61" height="1" fill="#e97132"/><rect x="0" y="27" width="61" height="1" fill="#e97132"/><rect x="0" y="36" width="61" height="1" fill="#e97132"/><rect x="0" y="45" width="61" height="1" fill="#e97132"/><rect x="0" y="0" width="1" height="46" fill="#e97132"/><rect x="60" y="0" width="1" height="46" fill="#e97132"/><path d="M3 4.5H58" stroke="#fff" stroke-width="1.5" stroke-dasharray="7 5" shape-rendering="auto"/><path d="M3 13.5H58" stroke="#000" stroke-width="1.2" stroke-dasharray="7 5" shape-rendering="auto"/><path d="M3 22.5H58" stroke="#000" stroke-width="1.2" stroke-dasharray="7 5" shape-rendering="auto"/><path d="M3 31.5H58" stroke="#000" stroke-width="1.2" stroke-dasharray="7 5" shape-rendering="auto"/><path d="M3 40.5H58" stroke="#000" stroke-width="1.2" stroke-dasharray="7 5" shape-rendering="auto"/></svg>
<svg style="left:874px;top:221px;background:#fff" width="61" height="46" viewBox="0 0 61 46" shape-rendering="crispEdges"><rect x="0" y="0" width="61" height="10" fill="#196b24"/><rect x="0" y="18" width="61" height="1" fill="#196b24"/><rect x="0" y="27" width="61" height="1" fill="#196b24"/><rect x="0" y="36" width="61" height="1" fill="#196b24"/><rect x="0" y="45" width="61" height="1" fill="#196b24"/><rect x="0" y="0" width="1" height="46" fill="#196b24"/><rect x="60" y="0" width="1" height="46" fill="#196b24"/><path d="M3 4.5H58" stroke="#fff" stroke-width="1.5" stroke-dasharray="7 5" shape-rendering="auto"/><path d="M3 13.5H58" stroke="#000" stroke-width="1.2" stroke-dasharray="7 5" shape-rendering="auto"/><path d="M3 22.5H58" stroke="#000" stroke-width="1.2" stroke-dasharray="7 5" shape-rendering="auto"/><path d="M3 31.5H58" stroke="#000" stroke-width="1.2" stroke-dasharray="7 5" shape-rendering="auto"/><path d="M3 40.5H58" stroke="#000" stroke-width="1.2" stroke-dasharray="7 5" shape-rendering="auto"/></svg>
<svg style="left:943px;top:221px;background:#fff" width="61" height="46" viewBox="0 0 61 46" shape-rendering="crispEdges"><rect x="0" y="0" width="61" height="10" fill="#0f9ed5"/><rect x="0" y="18" width="61" height="1" fill="#0f9ed5"/><rect x="0" y="27" width="61" height="1" fill="#0f9ed5"/><rect x="0" y="36" width="61" height="1" fill="#0f9ed5"/><rect x="0" y="45" width="61" height="1" fill="#0f9ed5"/><rect x="0" y="0" width="1" height="46" fill="#0f9ed5"/><rect x="60" y="0" width="1" height="46" fill="#0f9ed5"/><path d="M3 4.5H58" stroke="#fff" stroke-width="1.5" stroke-dasharray="7 5" shape-rendering="auto"/><path d="M3 13.5H58" stroke="#000" stroke-width="1.2" stroke-dasharray="7 5" shape-rendering="auto"/><path d="M3 22.5H58" stroke="#000" stroke-width="1.2" stroke-dasharray="7 5" shape-rendering="auto"/><path d="M3 31.5H58" stroke="#000" stroke-width="1.2" stroke-dasharray="7 5" shape-rendering="auto"/><path d="M3 40.5H58" stroke="#000" stroke-width="1.2" stroke-dasharray="7 5" shape-rendering="auto"/></svg>
<svg style="left:1012px;top:221px;background:#fff" width="61" height="46" viewBox="0 0 61 46" shape-rendering="crispEdges"><rect x="0" y="0" width="61" height="10" fill="#a02b93"/><rect x="0" y="18" width="61" height="1" fill="#a02b93"/><rect x="0" y="27" width="61" height="1" fill="#a02b93"/><rect x="0" y="36" width="61" height="1" fill="#a02b93"/><rect x="0" y="45" width="61" height="1" fill="#a02b93"/><rect x="0" y="0" width="1" height="46" fill="#a02b93"/><rect x="60" y="0" width="1" height="46" fill="#a02b93"/><path d="M3 4.5H58" stroke="#fff" stroke-width="1.5" stroke-dasharray="7 5" shape-rendering="auto"/><path d="M3 13.5H58" stroke="#000" stroke-width="1.2" stroke-dasharray="7 5" shape-rendering="auto"/><path d="M3 22.5H58" stroke="#000" stroke-width="1.2" stroke-dasharray="7 5" shape-rendering="auto"/><path d="M3 31.5H58" stroke="#000" stroke-width="1.2" stroke-dasharray="7 5" shape-rendering="auto"/><path d="M3 40.5H58" stroke="#000" stroke-width="1.2" stroke-dasharray="7 5" shape-rendering="auto"/></svg>
<svg style="left:1081px;top:221px;background:#fff" width="61" height="46" viewBox="0 0 61 46" shape-rendering="crispEdges"><rect x="0" y="0" width="61" height="10" fill="#4ea72e"/><rect x="0" y="18" width="61" height="1" fill="#4ea72e"/><rect x="0" y="27" width="61" height="1" fill="#4ea72e"/><rect x="0" y="36" width="61" height="1" fill="#4ea72e"/><rect x="0" y="45" width="61" height="1" fill="#4ea72e"/><rect x="0" y="0" width="1" height="46" fill="#4ea72e"/><rect x="60" y="0" width="1" height="46" fill="#4ea72e"/><path d="M3 4.5H58" stroke="#fff" stroke-width="1.5" stroke-dasharray="7 5" shape-rendering="auto"/><path d="M3 13.5H58" stroke="#000" stroke-width="1.2" stroke-dasharray="7 5" shape-rendering="auto"/><path d="M3 22.5H58" stroke="#000" stroke-width="1.2" stroke-dasharray="7 5" shape-rendering="auto"/><path d="M3 31.5H58" stroke="#000" stroke-width="1.2" stroke-dasharray="7 5" shape-rendering="auto"/><path d="M3 40.5H58" stroke="#000" stroke-width="1.2" stroke-dasharray="7 5" shape-rendering="auto"/></svg>
<svg style="left:667px;top:275px;background:#fff" width="61" height="46" viewBox="0 0 61 46" shape-rendering="crispEdges"><rect x="0" y="9" width="61" height="9" fill="#d9d9d9"/><rect x="0" y="27" width="61" height="9" fill="#d9d9d9"/><rect x="0" y="0" width="61" height="1" fill="#000000"/><rect x="0" y="9" width="61" height="1" fill="#000000"/><rect x="0" y="18" width="61" height="1" fill="#000000"/><rect x="0" y="27" width="61" height="1" fill="#000000"/><rect x="0" y="36" width="61" height="1" fill="#000000"/><rect x="0" y="45" width="61" height="1" fill="#000000"/><rect x="0" y="0" width="1" height="46" fill="#000000"/><rect x="12" y="0" width="1" height="46" fill="#000000"/><rect x="24" y="0" width="1" height="46" fill="#000000"/><rect x="36" y="0" width="1" height="46" fill="#000000"/><rect x="48" y="0" width="1" height="46" fill="#000000"/><rect x="60" y="0" width="1" height="46" fill="#000000"/><path d="M3 4.5H58" stroke="#000" stroke-width="1.5" stroke-dasharray="7 5" shape-rendering="auto"/><path d="M3 13.5H58" stroke="#000" stroke-width="1.5" stroke-dasharray="7 5" shape-rendering="auto"/><path d="M3 22.5H58" stroke="#000" stroke-width="1.5" stroke-dasharray="7 5" shape-rendering="auto"/><path d="M3 31.5H58" stroke="#000" stroke-width="1.5" stroke-dasharray="7 5" shape-rendering="auto"/><path d="M3 40.5H58" stroke="#000" stroke-width="1.5" stroke-dasharray="7 5" shape-rendering="auto"/></svg>
<svg style="left:736px;top:275px;background:#fff" width="61" height="46" viewBox="0 0 61 46" shape-rendering="crispEdges"><rect x="0" y="9" width="61" height="9" fill="#c0e6f5"/><rect x="0" y="27" width="61" height="9" fill="#c0e6f5"/><rect x="0" y="0" width="61" height="1" fill="#156082"/><rect x="0" y="9" width="61" height="1" fill="#156082"/><rect x="0" y="18" width="61" height="1" fill="#156082"/><rect x="0" y="27" width="61" height="1" fill="#156082"/><rect x="0" y="36" width="61" height="1" fill="#156082"/><rect x="0" y="45" width="61" height="1" fill="#156082"/><rect x="0" y="0" width="1" height="46" fill="#156082"/><rect x="12" y="0" width="1" height="46" fill="#156082"/><rect x="24" y="0" width="1" height="46" fill="#156082"/><rect x="36" y="0" width="1" height="46" fill="#156082"/><rect x="48" y="0" width="1" height="46" fill="#156082"/><rect x="60" y="0" width="1" height="46" fill="#156082"/><path d="M3 4.5H58" stroke="#000" stroke-width="1.5" stroke-dasharray="7 5" shape-rendering="auto"/><path d="M3 13.5H58" stroke="#000" stroke-width="1.5" stroke-dasharray="7 5" shape-rendering="auto"/><path d="M3 22.5H58" stroke="#000" stroke-width="1.5" stroke-dasharray="7 5" shape-rendering="auto"/><path d="M3 31.5H58" stroke="#000" stroke-width="1.5" stroke-dasharray="7 5" shape-rendering="auto"/><path d="M3 40.5H58" stroke="#000" stroke-width="1.5" stroke-dasharray="7 5" shape-rendering="auto"/></svg>
<svg style="left:805px;top:275px;background:#fff" width="61" height="46" viewBox="0 0 61 46" shape-rendering="crispEdges"><rect x="0" y="9" width="61" height="9" fill="#fbe2d5"/><rect x="0" y="27" width="61" height="9" fill="#fbe2d5"/><rect x="0" y="0" width="61" height="1" fill="#e97132"/><rect x="0" y="9" width="61" height="1" fill="#e97132"/><rect x="0" y="18" width="61" height="1" fill="#e97132"/><rect x="0" y="27" width="61" height="1" fill="#e97132"/><rect x="0" y="36" width="61" height="1" fill="#e97132"/><rect x="0" y="45" width="61" height="1" fill="#e97132"/><rect x="0" y="0" width="1" height="46" fill="#e97132"/><rect x="12" y="0" width="1" height="46" fill="#e97132"/><rect x="24" y="0" width="1" height="46" fill="#e97132"/><rect x="36" y="0" width="1" height="46" fill="#e97132"/><rect x="48" y="0" width="1" height="46" fill="#e97132"/><rect x="60" y="0" width="1" height="46" fill="#e97132"/><path d="M3 4.5H58" stroke="#000" stroke-width="1.5" stroke-dasharray="7 5" shape-rendering="auto"/><path d="M3 13.5H58" stroke="#000" stroke-width="1.5" stroke-dasharray="7 5" shape-rendering="auto"/><path d="M3 22.5H58" stroke="#000" stroke-width="1.5" stroke-dasharray="7 5" shape-rendering="auto"/><path d="M3 31.5H58" stroke="#000" stroke-width="1.5" stroke-dasharray="7 5" shape-rendering="auto"/><path d="M3 40.5H58" stroke="#000" stroke-width="1.5" stroke-dasharray="7 5" shape-rendering="auto"/></svg>
<svg style="left:874px;top:275px;background:#fff" width="61" height="46" viewBox="0 0 61 46" shape-rendering="crispEdges"><rect x="0" y="9" width="61" height="9" fill="#c1f0c8"/><rect x="0" y="27" width="61" height="9" fill="#c1f0c8"/><rect x="0" y="0" width="61" height="1" fill="#196b24"/><rect x="0" y="9" width="61" height="1" fill="#196b24"/><rect x="0" y="18" width="61" height="1" fill="#196b24"/><rect x="0" y="27" width="61" height="1" fill="#196b24"/><rect x="0" y="36" width="61" height="1" fill="#196b24"/><rect x="0" y="45" width="61" height="1" fill="#196b24"/><rect x="0" y="0" width="1" height="46" fill="#196b24"/><rect x="12" y="0" width="1" height="46" fill="#196b24"/><rect x="24" y="0" width="1" height="46" fill="#196b24"/><rect x="36" y="0" width="1" height="46" fill="#196b24"/><rect x="48" y="0" width="1" height="46" fill="#196b24"/><rect x="60" y="0" width="1" height="46" fill="#196b24"/><path d="M3 4.5H58" stroke="#000" stroke-width="1.5" stroke-dasharray="7 5" shape-rendering="auto"/><path d="M3 13.5H58" stroke="#000" stroke-width="1.5" stroke-dasharray="7 5" shape-rendering="auto"/><path d="M3 22.5H58" stroke="#000" stroke-width="1.5" stroke-dasharray="7 5" shape-rendering="auto"/><path d="M3 31.5H58" stroke="#000" stroke-width="1.5" stroke-dasharray="7 5" shape-rendering="auto"/><path d="M3 40.5H58" stroke="#000" stroke-width="1.5" stroke-dasharray="7 5" shape-rendering="auto"/></svg>
<svg style="left:943px;top:275px;background:#fff" width="61" height="46" viewBox="0 0 61 46" shape-rendering="crispEdges"><rect x="0" y="9" width="61" height="9" fill="#caedfb"/><rect x="0" y="27" width="61" height="9" fill="#caedfb"/><rect x="0" y="0" width="61" height="1" fill="#0f9ed5"/><rect x="0" y="9" width="61" height="1" fill="#0f9ed5"/><rect x="0" y="18" width="61" height="1" fill="#0f9ed5"/><rect x="0" y="27" width="61" height="1" fill="#0f9ed5"/><rect x="0" y="36" width="61" height="1" fill="#0f9ed5"/><rect x="0" y="45" width="61" height="1" fill="#0f9ed5"/><rect x="0" y="0" width="1" height="46" fill="#0f9ed5"/><rect x="12" y="0" width="1" height="46" fill="#0f9ed5"/><rect x="24" y="0" width="1" height="46" fill="#0f9ed5"/><rect x="36" y="0" width="1" height="46" fill="#0f9ed5"/><rect x="48" y="0" width="1" height="46" fill="#0f9ed5"/><rect x="60" y="0" width="1" height="46" fill="#0f9ed5"/><path d="M3 4.5H58" stroke="#000" stroke-width="1.5" stroke-dasharray="7 5" shape-rendering="auto"/><path d="M3 13.5H58" stroke="#000" stroke-width="1.5" stroke-dasharray="7 5" shape-rendering="auto"/><path d="M3 22.5H58" stroke="#000" stroke-width="1.5" stroke-dasharray="7 5" shape-rendering="auto"/><path d="M3 31.5H58" stroke="#000" stroke-width="1.5" stroke-dasharray="7 5" shape-rendering="auto"/><path d="M3 40.5H58" stroke="#000" stroke-width="1.5" stroke-dasharray="7 5" shape-rendering="auto"/></svg>
<svg style="left:1012px;top:275px;background:#fff" width="61" height="46" viewBox="0 0 61 46" shape-rendering="crispEdges"><rect x="0" y="9" width="61" height="9" fill="#f2ceef"/><rect x="0" y="27" width="61" height="9" fill="#f2ceef"/><rect x="0" y="0" width="61" height="1" fill="#a02b93"/><rect x="0" y="9" width="61" height="1" fill="#a02b93"/><rect x="0" y="18" width="61" height="1" fill="#a02b93"/><rect x="0" y="27" width="61" height="1" fill="#a02b93"/><rect x="0" y="36" width="61" height="1" fill="#a02b93"/><rect x="0" y="45" width="61" height="1" fill="#a02b93"/><rect x="0" y="0" width="1" height="46" fill="#a02b93"/><rect x="12" y="0" width="1" height="46" fill="#a02b93"/><rect x="24" y="0" width="1" height="46" fill="#a02b93"/><rect x="36" y="0" width="1" height="46" fill="#a02b93"/><rect x="48" y="0" width="1" height="46" fill="#a02b93"/><rect x="60" y="0" width="1" height="46" fill="#a02b93"/><path d="M3 4.5H58" stroke="#000" stroke-width="1.5" stroke-dasharray="7 5" shape-rendering="auto"/><path d="M3 13.5H58" stroke="#000" stroke-width="1.5" stroke-dasharray="7 5" shape-rendering="auto"/><path d="M3 22.5H58" stroke="#000" stroke-width="1.5" stroke-dasharray="7 5" shape-rendering="auto"/><path d="M3 31.5H58" stroke="#000" stroke-width="1.5" stroke-dasharray="7 5" shape-rendering="auto"/><path d="M3 40.5H58" stroke="#000" stroke-width="1.5" stroke-dasharray="7 5" shape-rendering="auto"/></svg>
<svg style="left:1081px;top:275px;background:#fff" width="61" height="46" viewBox="0 0 61 46" shape-rendering="crispEdges"><rect x="0" y="9" width="61" height="9" fill="#d9f2d0"/><rect x="0" y="27" width="61" height="9" fill="#d9f2d0"/><rect x="0" y="0" width="61" height="1" fill="#4ea72e"/><rect x="0" y="9" width="61" height="1" fill="#4ea72e"/><rect x="0" y="18" width="61" height="1" fill="#4ea72e"/><rect x="0" y="27" width="61" height="1" fill="#4ea72e"/><rect x="0" y="36" width="61" height="1" fill="#4ea72e"/><rect x="0" y="45" width="61" height="1" fill="#4ea72e"/><rect x="0" y="0" width="1" height="46" fill="#4ea72e"/><rect x="12" y="0" width="1" height="46" fill="#4ea72e"/><rect x="24" y="0" width="1" height="46" fill="#4ea72e"/><rect x="36" y="0" width="1" height="46" fill="#4ea72e"/><rect x="48" y="0" width="1" height="46" fill="#4ea72e"/><rect x="60" y="0" width="1" height="46" fill="#4ea72e"/><path d="M3 4.5H58" stroke="#000" stroke-width="1.5" stroke-dasharray="7 5" shape-rendering="auto"/><path d="M3 13.5H58" stroke="#000" stroke-width="1.5" stroke-dasharray="7 5" shape-rendering="auto"/><path d="M3 22.5H58" stroke="#000" stroke-width="1.5" stroke-dasharray="7 5" shape-rendering="auto"/><path d="M3 31.5H58" stroke="#000" stroke-width="1.5" stroke-dasharray="7 5" shape-rendering="auto"/><path d="M3 40.5H58" stroke="#000" stroke-width="1.5" stroke-dasharray="7 5" shape-rendering="auto"/></svg>
<svg style="left:667px;top:368px;background:#fff" width="61" height="46" viewBox="0 0 61 46" shape-rendering="crispEdges"><rect x="0" y="9" width="61" height="9" fill="#d9d9d9"/><rect x="0" y="27" width="61" height="9" fill="#d9d9d9"/><rect x="0" y="18" width="61" height="1" fill="#000000"/><rect x="0" y="27" width="61" height="1" fill="#000000"/><rect x="0" y="36" width="61" height="1" fill="#000000"/><rect x="0" y="45" width="61" height="1" fill="#000000"/><rect x="0" y="0" width="1" height="46" fill="#000000"/><rect x="60" y="0" width="1" height="46" fill="#000000"/><rect x="0" y="0" width="61" height="1" fill="#000000"/><rect x="0" y="0" width="61" height="10" fill="#000000"/><path d="M3 4.5H58" stroke="#fff" stroke-width="1.5" stroke-dasharray="7 5" shape-rendering="auto"/><path d="M3 13.5H58" stroke="#000" stroke-width="1.2" stroke-dasharray="7 5" shape-rendering="auto"/><path d="M3 22.5H58" stroke="#000" stroke-width="1.2" stroke-dasharray="7 5" shape-rendering="auto"/><path d="M3 31.5H58" stroke="#000" stroke-width="1.2" stroke-dasharray="7 5" shape-rendering="auto"/><path d="M3 40.5H58" stroke="#000" stroke-width="1.2" stroke-dasharray="7 5" shape-rendering="auto"/></svg>
<svg style="left:736px;top:368px;background:#fff" width="61" height="46" viewBox="0 0 61 46" shape-rendering="crispEdges"><rect x="0" y="9" width="61" height="9" fill="#c0e6f5"/><rect x="0" y="27" width="61" height="9" fill="#c0e6f5"/><rect x="0" y="18" width="61" height="1" fill="#44b3e1"/><rect x="0" y="27" width="61" height="1" fill="#44b3e1"/><rect x="0" y="36" width="61" height="1" fill="#44b3e1"/><rect x="0" y="45" width="61" height="1" fill="#44b3e1"/><rect x="0" y="0" width="1" height="46" fill="#44b3e1"/><rect x="60" y="0" width="1" height="46" fill="#44b3e1"/><rect x="0" y="0" width="61" height="1" fill="#44b3e1"/><rect x="1" y="1" width="59" height="9" fill="#156082"/><path d="M3 4.5H58" stroke="#fff" stroke-width="1.5" stroke-dasharray="7 5" shape-rendering="auto"/><path d="M3 13.5H58" stroke="#000" stroke-width="1.2" stroke-dasharray="7 5" shape-rendering="auto"/><path d="M3 22.5H58" stroke="#000" stroke-width="1.2" stroke-dasharray="7 5" shape-rendering="auto"/><path d="M3 31.5H58" stroke="#000" stroke-width="1.2" stroke-dasharray="7 5" shape-rendering="auto"/><path d="M3 40.5H58" stroke="#000" stroke-width="1.2" stroke-dasharray="7 5" shape-rendering="auto"/></svg>
<svg style="left:805px;top:368px;background:#fff" width="61" height="46" viewBox="0 0 61 46" shape-rendering="crispEdges"><rect x="0" y="9" width="61" height="9" fill="#fbe2d5"/><rect x="0" y="27" width="61" height="9" fill="#fbe2d5"/><rect x="0" y="18" width="61" height="1" fill="#f1a983"/><rect x="0" y="27" width="61" height="1" fill="#f1a983"/><rect x="0" y="36" width="61" height="1" fill="#f1a983"/><rect x="0" y="45" width="61" height="1" fill="#f1a983"/><rect x="0" y="0" width="1" height="46" fill="#f1a983"/><rect x="60" y="0" width="1" height="46" fill="#f1a983"/><rect x="0" y="0" width="61" height="1" fill="#f1a983"/><rect x="1" y="1" width="59" height="9" fill="#e97132"/><path d="M3 4.5H58" stroke="#fff" stroke-width="1.5" stroke-dasharray="7 5" shape-rendering="auto"/><path d="M3 13.5H58" stroke="#000" stroke-width="1.2" stroke-dasharray="7 5" shape-rendering="auto"/><path d="M3 22.5H58" stroke="#000" stroke-width="1.2" stroke-dasharray="7 5" shape-rendering="auto"/><path d="M3 31.5H58" stroke="#000" stroke-width="1.2" stroke-dasharray="7 5" shape-rendering="auto"/><path d="M3 40.5H58" stroke="#000" stroke-width="1.2" stroke-dasharray="7 5" shape-rendering="auto"/></svg>
<svg style="left:874px;top:368px;background:#fff" width="61" height="46" viewBox="0 0 61 46" shape-rendering="crispEdges"><rect x="0" y="9" width="61" height="9" fill="#c1f0c8"/><rect x="0" y="27" width="61" height="9" fill="#c1f0c8"/><rect x="0" y="18" width="61" height="1" fill="#47d359"/><rect x="0" y="27" width="61" height="1" fill="#47d359"/><rect x="0" y="36" width="61" height="1" fill="#47d359"/><rect x="0" y="45" width="61" height="1" fill="#47d359"/><rect x="0" y="0" width="1" height="46" fill="#47d359"/><rect x="60" y="0" width="1" height="46" fill="#47d359"/><rect x="0" y="0" width="61" height="1" fill="#47d359"/><rect x="1" y="1" width="59" height="9" fill="#196b24"/><path d="M3 4.5H58" stroke="#fff" stroke-width="1.5" stroke-dasharray="7 5" shape-rendering="auto"/><path d="M3 13.5H58" stroke="#000" stroke-width="1.2" stroke-dasharray="7 5" shape-rendering="auto"/><path d="M3 22.5H58" stroke="#000" stroke-width="1.2" stroke-dasharray="7 5" shape-rendering="auto"/><path d="M3 31.5H58" stroke="#000" stroke-width="1.2" stroke-dasharray="7 5" shape-rendering="auto"/><path d="M3 40.5H58" stroke="#000" stroke-width="1.2" stroke-dasharray="7 5" shape-rendering="auto"/></svg>
<svg style="left:943px;top:368px;background:#fff" width="61" height="46" viewBox="0 0 61 46" shape-rendering="crispEdges"><rect x="0" y="9" width="61" height="9" fill="#caedfb"/><rect x="0" y="27" width="61" height="9" fill="#caedfb"/><rect x="0" y="18" width="61" height="1" fill="#61cbf3"/><rect x="0" y="27" width="61" height="1" fill="#61cbf3"/><rect x="0" y="36" width="61" height="1" fill="#61cbf3"/><rect x="0" y="45" width="61" height="1" fill="#61cbf3"/><rect x="0" y="0" width="1" height="46" fill="#61cbf3"/><rect x="60" y="0" width="1" height="46" fill="#61cbf3"/><rect x="0" y="0" width="61" height="1" fill="#61cbf3"/><rect x="1" y="1" width="59" height="9" fill="#0f9ed5"/><path d="M3 4.5H58" stroke="#fff" stroke-width="1.5" stroke-dasharray="7 5" shape-rendering="auto"/><path d="M3 13.5H58" stroke="#000" stroke-width="1.2" stroke-dasharray="7 5" shape-rendering="auto"/><path d="M3 22.5H58" stroke="#000" stroke-width="1.2" stroke-dasharray="7 5" shape-rendering="auto"/><path d="M3 31.5H58" stroke="#000" stroke-width="1.2" stroke-dasharray="7 5" shape-rendering="auto"/><path d="M3 40.5H58" stroke="#000" stroke-width="1.2" stroke-dasharray="7 5" shape-rendering="auto"/></svg>
<svg style="left:1012px;top:368px;background:#fff" width="61" height="46" viewBox="0 0 61 46" shape-rendering="crispEdges"><rect x="0" y="9" width="61" height="9" fill="#f2ceef"/><rect x="0" y="27" width="61" height="9" fill="#f2ceef"/><rect x="0" y="18" width="61" height="1" fill="#d86dcd"/><rect x="0" y="27" width="61" height="1" fill="#d86dcd"/><rect x="0" y="36" width="61" height="1" fill="#d86dcd"/><rect x="0" y="45" width="61" height="1" fill="#d86dcd"/><rect x="0" y="0" width="1" height="46" fill="#d86dcd"/><rect x="60" y="0" width="1" height="46" fill="#d86dcd"/><rect x="0" y="0" width="61" height="1" fill="#d86dcd"/><rect x="1" y="1" width="59" height="9" fill="#a02b93"/><path d="M3 4.5H58" stroke="#fff" stroke-width="1.5" stroke-dasharray="7 5" shape-rendering="auto"/><path d="M3 13.5H58" stroke="#000" stroke-width="1.2" stroke-dasharray="7 5" shape-rendering="auto"/><path d="M3 22.5H58" stroke="#000" stroke-width="1.2" stroke-dasharray="7 5" shape-rendering="auto"/><path d="M3 31.5H58" stroke="#000" stroke-width="1.2" stroke-dasharray="7 5" shape-rendering="auto"/><path d="M3 40.5H58" stroke="#000" stroke-width="1.2" stroke-dasharray="7 5" shape-rendering="auto"/></svg>
<svg style="left:1081px;top:368px;background:#fff" width="61" height="46" viewBox="0 0 61 46" shape-rendering="crispEdges"><rect x="0" y="9" width="61" height="9" fill="#d9f2d0"/><rect x="0" y="27" width="61" height="9" fill="#d9f2d0"/><rect x="0" y="18" width="61" height="1" fill="#8ed973"/><rect x="0" y="27" width="61" height="1" fill="#8ed973"/><rect x="0" y="36" width="61" height="1" fill="#8ed973"/><rect x="0" y="45" width="61" height="1" fill="#8ed973"/><rect x="0" y="0" width="1" height="46" fill="#8ed973"/><rect x="60" y="0" width="1" height="46" fill="#8ed973"/><rect x="0" y="0" width="61" height="1" fill="#8ed973"/><rect x="1" y="1" width="59" height="9" fill="#4ea72e"/><path d="M3 4.5H58" stroke="#fff" stroke-width="1.5" stroke-dasharray="7 5" shape-rendering="auto"/><path d="M3 13.5H58" stroke="#000" stroke-width="1.2" stroke-dasharray="7 5" shape-rendering="auto"/><path d="M3 22.5H58" stroke="#000" stroke-width="1.2" stroke-dasharray="7 5" shape-rendering="auto"/><path d="M3 31.5H58" stroke="#000" stroke-width="1.2" stroke-dasharray="7 5" shape-rendering="auto"/><path d="M3 40.5H58" stroke="#000" stroke-width="1.2" stroke-dasharray="7 5" shape-rendering="auto"/></svg>
<svg style="left:667px;top:422px;background:#fff" width="61" height="46" viewBox="0 0 61 46" shape-rendering="crispEdges"><rect x="0" y="0" width="61" height="9" fill="#000000"/><rect x="0" y="9" width="61" height="9" fill="#a6a6a6"/><rect x="0" y="18" width="61" height="9" fill="#d9d9d9"/><rect x="0" y="27" width="61" height="9" fill="#a6a6a6"/><rect x="0" y="36" width="61" height="9" fill="#d9d9d9"/><rect x="0" y="45" width="61" height="1" fill="#d9d9d9"/><rect x="0" y="9" width="61" height="1" fill="#fff"/><rect x="0" y="18" width="61" height="1" fill="#fff"/><rect x="0" y="27" width="61" height="1" fill="#fff"/><rect x="0" y="36" width="61" height="1" fill="#fff"/><rect x="12" y="0" width="1" height="46" fill="#fff"/><rect x="24" y="0" width="1" height="46" fill="#fff"/><rect x="36" y="0" width="1" height="46" fill="#fff"/><rect x="48" y="0" width="1" height="46" fill="#fff"/><path d="M3 4.5H58" stroke="#fff" stroke-width="1.5" stroke-dasharray="7 5" shape-rendering="auto"/><path d="M3 13.5H58" stroke="#000" stroke-width="1.5" stroke-dasharray="7 5" shape-rendering="auto"/><path d="M3 22.5H58" stroke="#000" stroke-width="1.5" stroke-dasharray="7 5" shape-rendering="auto"/><path d="M3 31.5H58" stroke="#000" stroke-width="1.5" stroke-dasharray="7 5" shape-rendering="auto"/><path d="M3 40.5H58" stroke="#000" stroke-width="1.5" stroke-dasharray="7 5" shape-rendering="auto"/></svg>
<svg style="left:736px;top:422px;background:#fff" width="61" height="46" viewBox="0 0 61 46" shape-rendering="crispEdges"><rect x="0" y="0" width="61" height="9" fill="#156082"/><rect x="0" y="9" width="61" height="9" fill="#83cceb"/><rect x="0" y="18" width="61" height="9" fill="#c0e6f5"/><rect x="0" y="27" width="61" height="9" fill="#83cceb"/><rect x="0" y="36" width="61" height="9" fill="#c0e6f5"/><rect x="0" y="45" width="61" height="1" fill="#c0e6f5"/><rect x="0" y="9" width="61" height="1" fill="#fff"/><rect x="0" y="18" width="61" height="1" fill="#fff"/><rect x="0" y="27" width="61" height="1" fill="#fff"/><rect x="0" y="36" width="61" height="1" fill="#fff"/><rect x="12" y="0" width="1" height="46" fill="#fff"/><rect x="24" y="0" width="1" height="46" fill="#fff"/><rect x="36" y="0" width="1" height="46" fill="#fff"/><rect x="48" y="0" width="1" height="46" fill="#fff"/><path d="M3 4.5H58" stroke="#fff" stroke-width="1.5" stroke-dasharray="7 5" shape-rendering="auto"/><path d="M3 13.5H58" stroke="#000" stroke-width="1.5" stroke-dasharray="7 5" shape-rendering="auto"/><path d="M3 22.5H58" stroke="#000" stroke-width="1.5" stroke-dasharray="7 5" shape-rendering="auto"/><path d="M3 31.5H58" stroke="#000" stroke-width="1.5" stroke-dasharray="7 5" shape-rendering="auto"/><path d="M3 40.5H58" stroke="#000" stroke-width="1.5" stroke-dasharray="7 5" shape-rendering="auto"/></svg>
<svg style="left:805px;top:422px;background:#fff" width="61" height="46" viewBox="0 0 61 46" shape-rendering="crispEdges"><rect x="0" y="0" width="61" height="9" fill="#e97132"/><rect x="0" y="9" width="61" height="9" fill="#f6c5ac"/><rect x="0" y="18" width="61" height="9" fill="#fbe2d5"/><rect x="0" y="27" width="61" height="9" fill="#f6c5ac"/><rect x="0" y="36" width="61" height="9" fill="#fbe2d5"/><rect x="0" y="45" width="61" height="1" fill="#fbe2d5"/><rect x="0" y="9" width="61" height="1" fill="#fff"/><rect x="0" y="18" width="61" height="1" fill="#fff"/><rect x="0" y="27" width="61" height="1" fill="#fff"/><rect x="0" y="36" width="61" height="1" fill="#fff"/><rect x="12" y="0" width="1" height="46" fill="#fff"/><rect x="24" y="0" width="1" height="46" fill="#fff"/><rect x="36" y="0" width="1" height="46" fill="#fff"/><rect x="48" y="0" width="1" height="46" fill="#fff"/><path d="M3 4.5H58" stroke="#fff" stroke-width="1.5" stroke-dasharray="7 5" shape-rendering="auto"/><path d="M3 13.5H58" stroke="#000" stroke-width="1.5" stroke-dasharray="7 5" shape-rendering="auto"/><path d="M3 22.5H58" stroke="#000" stroke-width="1.5" stroke-dasharray="7 5" shape-rendering="auto"/><path d="M3 31.5H58" stroke="#000" stroke-width="1.5" stroke-dasharray="7 5" shape-rendering="auto"/><path d="M3 40.5H58" stroke="#000" stroke-width="1.5" stroke-dasharray="7 5" shape-rendering="auto"/></svg>
<svg style="left:874px;top:422px;background:#fff" width="61" height="46" viewBox="0 0 61 46" shape-rendering="crispEdges"><rect x="0" y="0" width="61" height="9" fill="#196b24"/><rect x="0" y="9" width="61" height="9" fill="#84e291"/><rect x="0" y="18" width="61" height="9" fill="#c1f0c8"/><rect x="0" y="27" width="61" height="9" fill="#84e291"/><rect x="0" y="36" width="61" height="9" fill="#c1f0c8"/><rect x="0" y="45" width="61" height="1" fill="#c1f0c8"/><rect x="0" y="9" width="61" height="1" fill="#fff"/><rect x="0" y="18" width="61" height="1" fill="#fff"/><rect x="0" y="27" width="61" height="1" fill="#fff"/><rect x="0" y="36" width="61" height="1" fill="#fff"/><rect x="12" y="0" width="1" height="46" fill="#fff"/><rect x="24" y="0" width="1" height="46" fill="#fff"/><rect x="36" y="0" width="1" height="46" fill="#fff"/><rect x="48" y="0" width="1" height="46" fill="#fff"/><path d="M3 4.5H58" stroke="#fff" stroke-width="1.5" stroke-dasharray="7 5" shape-rendering="auto"/><path d="M3 13.5H58" stroke="#000" stroke-width="1.5" stroke-dasharray="7 5" shape-rendering="auto"/><path d="M3 22.5H58" stroke="#000" stroke-width="1.5" stroke-dasharray="7 5" shape-rendering="auto"/><path d="M3 31.5H58" stroke="#000" stroke-width="1.5" stroke-dasharray="7 5" shape-rendering="auto"/><path d="M3 40.5H58" stroke="#000" stroke-width="1.5" stroke-dasharray="7 5" shape-rendering="auto"/></svg>
<svg style="left:943px;top:422px;background:#fff" width="61" height="46" viewBox="0 0 61 46" shape-rendering="crispEdges"><rect x="0" y="0" width="61" height="9" fill="#0f9ed5"/><rect x="0" y="9" width="61" height="9" fill="#94dcf8"/><rect x="0" y="18" width="61" height="9" fill="#caedfb"/><rect x="0" y="27" width="61" height="9" fill="#94dcf8"/><rect x="0" y="36" width="61" height="9" fill="#caedfb"/><rect x="0" y="45" width="61" height="1" fill="#caedfb"/><rect x="0" y="9" width="61" height="1" fill="#fff"/><rect x="0" y="18" width="61" height="1" fill="#fff"/><rect x="0" y="27" width="61" height="1" fill="#fff"/><rect x="0" y="36" width="61" height="1" fill="#fff"/><rect x="12" y="0" width="1" height="46" fill="#fff"/><rect x="24" y="0" width="1" height="46" fill="#fff"/><rect x="36" y="0" width="1" height="46" fill="#fff"/><rect x="48" y="0" width="1" height="46" fill="#fff"/><path d="M3 4.5H58" stroke="#fff" stroke-width="1.5" stroke-dasharray="7 5" shape-rendering="auto"/><path d="M3 13.5H58" stroke="#000" stroke-width="1.5" stroke-dasharray="7 5" shape-rendering="auto"/><path d="M3 22.5H58" stroke="#000" stroke-width="1.5" stroke-dasharray="7 5" shape-rendering="auto"/><path d="M3 31.5H58" stroke="#000" stroke-width="1.5" stroke-dasharray="7 5" shape-rendering="auto"/><path d="M3 40.5H58" stroke="#000" stroke-width="1.5" stroke-dasharray="7 5" shape-rendering="auto"/></svg>
<svg style="left:1012px;top:422px;background:#fff" width="61" height="46" viewBox="0 0 61 46" shape-rendering="crispEdges"><rect x="0" y="0" width="61" height="9" fill="#a02b93"/><rect x="0" y="9" width="61" height="9" fill="#e49edd"/><rect x="0" y="18" width="61" height="9" fill="#f2ceef"/><rect x="0" y="27" width="61" height="9" fill="#e49edd"/><rect x="0" y="36" width="61" height="9" fill="#f2ceef"/><rect x="0" y="45" width="61" height="1" fill="#f2ceef"/><rect x="0" y="9" width="61" height="1" fill="#fff"/><rect x="0" y="18" width="61" height="1" fill="#fff"/><rect x="0" y="27" width="61" height="1" fill="#fff"/><rect x="0" y="36" width="61" height="1" fill="#fff"/><rect x="12" y="0" width="1" height="46" fill="#fff"/><rect x="24" y="0" width="1" height="46" fill="#fff"/><rect x="36" y="0" width="1" height="46" fill="#fff"/><rect x="48" y="0" width="1" height="46" fill="#fff"/><path d="M3 4.5H58" stroke="#fff" stroke-width="1.5" stroke-dasharray="7 5" shape-rendering="auto"/><path d="M3 13.5H58" stroke="#000" stroke-width="1.5" stroke-dasharray="7 5" shape-rendering="auto"/><path d="M3 22.5H58" stroke="#000" stroke-width="1.5" stroke-dasharray="7 5" shape-rendering="auto"/><path d="M3 31.5H58" stroke="#000" stroke-width="1.5" stroke-dasharray="7 5" shape-rendering="auto"/><path d="M3 40.5H58" stroke="#000" stroke-width="1.5" stroke-dasharray="7 5" shape-rendering="auto"/></svg>
<svg style="left:1081px;top:422px;background:#fff" width="61" height="46" viewBox="0 0 61 46" shape-rendering="crispEdges"><rect x="0" y="0" width="61" height="9" fill="#4ea72e"/><rect x="0" y="9" width="61" height="9" fill="#b3e5a1"/><rect x="0" y="18" width="61" height="9" fill="#d9f2d0"/><rect x="0" y="27" width="61" height="9" fill="#b3e5a1"/><rect x="0" y="36" width="61" height="9" fill="#d9f2d0"/><rect x="0" y="45" width="61" height="1" fill="#d9f2d0"/><rect x="0" y="9" width="61" height="1" fill="#fff"/><rect x="0" y="18" width="61" height="1" fill="#fff"/><rect x="0" y="27" width="61" height="1" fill="#fff"/><rect x="0" y="36" width="61" height="1" fill="#fff"/><rect x="12" y="0" width="1" height="46" fill="#fff"/><rect x="24" y="0" width="1" height="46" fill="#fff"/><rect x="36" y="0" width="1" height="46" fill="#fff"/><rect x="48" y="0" width="1" height="46" fill="#fff"/><path d="M3 4.5H58" stroke="#fff" stroke-width="1.5" stroke-dasharray="7 5" shape-rendering="auto"/><path d="M3 13.5H58" stroke="#000" stroke-width="1.5" stroke-dasharray="7 5" shape-rendering="auto"/><path d="M3 22.5H58" stroke="#000" stroke-width="1.5" stroke-dasharray="7 5" shape-rendering="auto"/><path d="M3 31.5H58" stroke="#000" stroke-width="1.5" stroke-dasharray="7 5" shape-rendering="auto"/><path d="M3 40.5H58" stroke="#000" stroke-width="1.5" stroke-dasharray="7 5" shape-rendering="auto"/></svg>
<svg style="left:667px;top:476px;background:#fff" width="61" height="46" viewBox="0 0 61 46" shape-rendering="crispEdges"><rect x="0" y="9" width="61" height="9" fill="#d9d9d9"/><rect x="0" y="27" width="61" height="9" fill="#d9d9d9"/><rect x="0" y="0" width="61" height="10" fill="#000"/><rect x="0" y="9" width="61" height="1" fill="#000"/><rect x="0" y="18" width="61" height="1" fill="#000"/><rect x="0" y="27" width="61" height="1" fill="#000"/><rect x="0" y="36" width="61" height="1" fill="#000"/><rect x="0" y="45" width="61" height="1" fill="#000"/><rect x="0" y="9" width="1" height="37" fill="#000"/><rect x="12" y="9" width="1" height="37" fill="#000"/><rect x="24" y="9" width="1" height="37" fill="#000"/><rect x="36" y="9" width="1" height="37" fill="#000"/><rect x="48" y="9" width="1" height="37" fill="#000"/><rect x="60" y="9" width="1" height="37" fill="#000"/><path d="M3 4.5H58" stroke="#fff" stroke-width="1.5" stroke-dasharray="7 5" shape-rendering="auto"/><path d="M3 13.5H58" stroke="#000" stroke-width="1.5" stroke-dasharray="7 5" shape-rendering="auto"/><path d="M3 22.5H58" stroke="#000" stroke-width="1.5" stroke-dasharray="7 5" shape-rendering="auto"/><path d="M3 31.5H58" stroke="#000" stroke-width="1.5" stroke-dasharray="7 5" shape-rendering="auto"/><path d="M3 40.5H58" stroke="#000" stroke-width="1.5" stroke-dasharray="7 5" shape-rendering="auto"/></svg>
<svg style="left:736px;top:476px;background:#fff" width="61" height="46" viewBox="0 0 61 46" shape-rendering="crispEdges"><rect x="0" y="10" width="61" height="9" fill="#d9d9d9"/><rect x="0" y="28" width="61" height="9" fill="#d9d9d9"/><rect x="0" y="0" width="61" height="9" fill="#156082"/><rect x="0" y="0" width="61" height="1" fill="#000"/><rect x="0" y="9" width="61" height="1" fill="#000"/><rect x="0" y="45" width="61" height="1" fill="#000"/><path d="M3 4.5H58" stroke="#fff" stroke-width="1.5" stroke-dasharray="7 5" shape-rendering="auto"/><path d="M3 13.5H58" stroke="#000" stroke-width="1.2" stroke-dasharray="7 5" shape-rendering="auto"/><path d="M3 22.5H58" stroke="#000" stroke-width="1.2" stroke-dasharray="7 5" shape-rendering="auto"/><path d="M3 31.5H58" stroke="#000" stroke-width="1.2" stroke-dasharray="7 5" shape-rendering="auto"/><path d="M3 40.5H58" stroke="#000" stroke-width="1.2" stroke-dasharray="7 5" shape-rendering="auto"/></svg>
<svg style="left:805px;top:476px;background:#fff" width="61" height="46" viewBox="0 0 61 46" shape-rendering="crispEdges"><rect x="0" y="10" width="61" height="9" fill="#d9d9d9"/><rect x="0" y="28" width="61" height="9" fill="#d9d9d9"/><rect x="0" y="0" width="61" height="9" fill="#e97132"/><rect x="0" y="0" width="61" height="1" fill="#000"/><rect x="0" y="9" width="61" height="1" fill="#000"/><rect x="0" y="45" width="61" height="1" fill="#000"/><path d="M3 4.5H58" stroke="#fff" stroke-width="1.5" stroke-dasharray="7 5" shape-rendering="auto"/><path d="M3 13.5H58" stroke="#000" stroke-width="1.2" stroke-dasharray="7 5" shape-rendering="auto"/><path d="M3 22.5H58" stroke="#000" stroke-width="1.2" stroke-dasharray="7 5" shape-rendering="auto"/><path d="M3 31.5H58" stroke="#000" stroke-width="1.2" stroke-dasharray="7 5" shape-rendering="auto"/><path d="M3 40.5H58" stroke="#000" stroke-width="1.2" stroke-dasharray="7 5" shape-rendering="auto"/></svg>
<svg style="left:874px;top:476px;background:#fff" width="61" height="46" viewBox="0 0 61 46" shape-rendering="crispEdges"><rect x="0" y="10" width="61" height="9" fill="#d9d9d9"/><rect x="0" y="28" width="61" height="9" fill="#d9d9d9"/><rect x="0" y="0" width="61" height="9" fill="#196b24"/><rect x="0" y="0" width="61" height="1" fill="#000"/><rect x="0" y="9" width="61" height="1" fill="#000"/><rect x="0" y="45" width="61" height="1" fill="#000"/><path d="M3 4.5H58" stroke="#fff" stroke-width="1.5" stroke-dasharray="7 5" shape-rendering="auto"/><path d="M3 13.5H58" stroke="#000" stroke-width="1.2" stroke-dasharray="7 5" shape-rendering="auto"/><path d="M3 22.5H58" stroke="#000" stroke-width="1.2" stroke-dasharray="7 5" shape-rendering="auto"/><path d="M3 31.5H58" stroke="#000" stroke-width="1.2" stroke-dasharray="7 5" shape-rendering="auto"/><path d="M3 40.5H58" stroke="#000" stroke-width="1.2" stroke-dasharray="7 5" shape-rendering="auto"/></svg>
<svg style="left:943px;top:476px;background:#fff" width="61" height="46" viewBox="0 0 61 46" shape-rendering="crispEdges"><rect x="0" y="10" width="61" height="9" fill="#d9d9d9"/><rect x="0" y="28" width="61" height="9" fill="#d9d9d9"/><rect x="0" y="0" width="61" height="9" fill="#0f9ed5"/><rect x="0" y="0" width="61" height="1" fill="#000"/><rect x="0" y="9" width="61" height="1" fill="#000"/><rect x="0" y="45" width="61" height="1" fill="#000"/><path d="M3 4.5H58" stroke="#fff" stroke-width="1.5" stroke-dasharray="7 5" shape-rendering="auto"/><path d="M3 13.5H58" stroke="#000" stroke-width="1.2" stroke-dasharray="7 5" shape-rendering="auto"/><path d="M3 22.5H58" stroke="#000" stroke-width="1.2" stroke-dasharray="7 5" shape-rendering="auto"/><path d="M3 31.5H58" stroke="#000" stroke-width="1.2" stroke-dasharray="7 5" shape-rendering="auto"/><path d="M3 40.5H58" stroke="#000" stroke-width="1.2" stroke-dasharray="7 5" shape-rendering="auto"/></svg>
<svg style="left:1012px;top:476px;background:#fff" width="61" height="46" viewBox="0 0 61 46" shape-rendering="crispEdges"><rect x="0" y="10" width="61" height="9" fill="#d9d9d9"/><rect x="0" y="28" width="61" height="9" fill="#d9d9d9"/><rect x="0" y="0" width="61" height="9" fill="#a02b93"/><rect x="0" y="0" width="61" height="1" fill="#000"/><rect x="0" y="9" width="61" height="1" fill="#000"/><rect x="0" y="45" width="61" height="1" fill="#000"/><path d="M3 4.5H58" stroke="#fff" stroke-width="1.5" stroke-dasharray="7 5" shape-rendering="auto"/><path d="M3 13.5H58" stroke="#000" stroke-width="1.2" stroke-dasharray="7 5" shape-rendering="auto"/><path d="M3 22.5H58" stroke="#000" stroke-width="1.2" stroke-dasharray="7 5" shape-rendering="auto"/><path d="M3 31.5H58" stroke="#000" stroke-width="1.2" stroke-dasharray="7 5" shape-rendering="auto"/><path d="M3 40.5H58" stroke="#000" stroke-width="1.2" stroke-dasharray="7 5" shape-rendering="auto"/></svg>
<svg style="left:1081px;top:476px;background:#fff" width="61" height="46" viewBox="0 0 61 46" shape-rendering="crispEdges"><rect x="0" y="10" width="61" height="9" fill="#d9d9d9"/><rect x="0" y="28" width="61" height="9" fill="#d9d9d9"/><rect x="0" y="0" width="61" height="9" fill="#4ea72e"/><rect x="0" y="0" width="61" height="1" fill="#000"/><rect x="0" y="9" width="61" height="1" fill="#000"/><rect x="0" y="45" width="61" height="1" fill="#000"/><path d="M3 4.5H58" stroke="#fff" stroke-width="1.5" stroke-dasharray="7 5" shape-rendering="auto"/><path d="M3 13.5H58" stroke="#000" stroke-width="1.2" stroke-dasharray="7 5" shape-rendering="auto"/><path d="M3 22.5H58" stroke="#000" stroke-width="1.2" stroke-dasharray="7 5" shape-rendering="auto"/><path d="M3 31.5H58" stroke="#000" stroke-width="1.2" stroke-dasharray="7 5" shape-rendering="auto"/><path d="M3 40.5H58" stroke="#000" stroke-width="1.2" stroke-dasharray="7 5" shape-rendering="auto"/></svg>
<svg style="left:667px;top:530px;background:#fff" width="61" height="46" viewBox="0 0 61 46" shape-rendering="crispEdges"><rect x="0" y="0" width="61" height="10" fill="#d9d9d9"/><rect x="0" y="9" width="61" height="10" fill="#a6a6a6"/><rect x="0" y="18" width="61" height="10" fill="#d9d9d9"/><rect x="0" y="27" width="61" height="10" fill="#a6a6a6"/><rect x="0" y="36" width="61" height="10" fill="#d9d9d9"/><rect x="0" y="0" width="61" height="1" fill="#000000"/><rect x="0" y="9" width="61" height="1" fill="#000000"/><rect x="0" y="18" width="61" height="1" fill="#000000"/><rect x="0" y="27" width="61" height="1" fill="#000000"/><rect x="0" y="36" width="61" height="1" fill="#000000"/><rect x="0" y="45" width="61" height="1" fill="#000000"/><rect x="0" y="0" width="1" height="46" fill="#000000"/><rect x="12" y="0" width="1" height="46" fill="#000000"/><rect x="24" y="0" width="1" height="46" fill="#000000"/><rect x="36" y="0" width="1" height="46" fill="#000000"/><rect x="48" y="0" width="1" height="46" fill="#000000"/><rect x="60" y="0" width="1" height="46" fill="#000000"/><path d="M3 4.5H58" stroke="#000" stroke-width="1.6" stroke-dasharray="7 5" shape-rendering="auto"/><path d="M3 13.5H58" stroke="#000" stroke-width="1.6" stroke-dasharray="7 5" shape-rendering="auto"/><path d="M3 22.5H58" stroke="#000" stroke-width="1.6" stroke-dasharray="7 5" shape-rendering="auto"/><path d="M3 31.5H58" stroke="#000" stroke-width="1.6" stroke-dasharray="7 5" shape-rendering="auto"/><path d="M3 40.5H58" stroke="#000" stroke-width="1.6" stroke-dasharray="7 5" shape-rendering="auto"/></svg>
<svg style="left:736px;top:530px;background:#fff" width="61" height="46" viewBox="0 0 61 46" shape-rendering="crispEdges"><rect x="0" y="0" width="61" height="10" fill="#c0e6f5"/><rect x="0" y="9" width="61" height="10" fill="#83cceb"/><rect x="0" y="18" width="61" height="10" fill="#c0e6f5"/><rect x="0" y="27" width="61" height="10" fill="#83cceb"/><rect x="0" y="36" width="61" height="10" fill="#c0e6f5"/><rect x="0" y="0" width="61" height="1" fill="#44b3e1"/><rect x="0" y="9" width="61" height="1" fill="#44b3e1"/><rect x="0" y="18" width="61" height="1" fill="#44b3e1"/><rect x="0" y="27" width="61" height="1" fill="#44b3e1"/><rect x="0" y="36" width="61" height="1" fill="#44b3e1"/><rect x="0" y="45" width="61" height="1" fill="#44b3e1"/><rect x="0" y="0" width="1" height="46" fill="#44b3e1"/><rect x="12" y="0" width="1" height="46" fill="#44b3e1"/><rect x="24" y="0" width="1" height="46" fill="#44b3e1"/><rect x="36" y="0" width="1" height="46" fill="#44b3e1"/><rect x="48" y="0" width="1" height="46" fill="#44b3e1"/><rect x="60" y="0" width="1" height="46" fill="#44b3e1"/><path d="M3 4.5H58" stroke="#000" stroke-width="1.6" stroke-dasharray="7 5" shape-rendering="auto"/><path d="M3 13.5H58" stroke="#000" stroke-width="1.6" stroke-dasharray="7 5" shape-rendering="auto"/><path d="M3 22.5H58" stroke="#000" stroke-width="1.6" stroke-dasharray="7 5" shape-rendering="auto"/><path d="M3 31.5H58" stroke="#000" stroke-width="1.6" stroke-dasharray="7 5" shape-rendering="auto"/><path d="M3 40.5H58" stroke="#000" stroke-width="1.6" stroke-dasharray="7 5" shape-rendering="auto"/></svg>
<svg style="left:805px;top:530px;background:#fff" width="61" height="46" viewBox="0 0 61 46" shape-rendering="crispEdges"><rect x="0" y="0" width="61" height="10" fill="#fbe2d5"/><rect x="0" y="9" width="61" height="10" fill="#f6c5ac"/><rect x="0" y="18" width="61" height="10" fill="#fbe2d5"/><rect x="0" y="27" width="61" height="10" fill="#f6c5ac"/><rect x="0" y="36" width="61" height="10" fill="#fbe2d5"/><rect x="0" y="0" width="61" height="1" fill="#f1a983"/><rect x="0" y="9" width="61" height="1" fill="#f1a983"/><rect x="0" y="18" width="61" height="1" fill="#f1a983"/><rect x="0" y="27" width="61" height="1" fill="#f1a983"/><rect x="0" y="36" width="61" height="1" fill="#f1a983"/><rect x="0" y="45" width="61" height="1" fill="#f1a983"/><rect x="0" y="0" width="1" height="46" fill="#f1a983"/><rect x="12" y="0" width="1" height="46" fill="#f1a983"/><rect x="24" y="0" width="1" height="46" fill="#f1a983"/><rect x="36" y="0" width="1" height="46" fill="#f1a983"/><rect x="48" y="0" width="1" height="46" fill="#f1a983"/><rect x="60" y="0" width="1" height="46" fill="#f1a983"/><path d="M3 4.5H58" stroke="#000" stroke-width="1.6" stroke-dasharray="7 5" shape-rendering="auto"/><path d="M3 13.5H58" stroke="#000" stroke-width="1.6" stroke-dasharray="7 5" shape-rendering="auto"/><path d="M3 22.5H58" stroke="#000" stroke-width="1.6" stroke-dasharray="7 5" shape-rendering="auto"/><path d="M3 31.5H58" stroke="#000" stroke-width="1.6" stroke-dasharray="7 5" shape-rendering="auto"/><path d="M3 40.5H58" stroke="#000" stroke-width="1.6" stroke-dasharray="7 5" shape-rendering="auto"/></svg>
<svg style="left:874px;top:530px;background:#fff" width="61" height="46" viewBox="0 0 61 46" shape-rendering="crispEdges"><rect x="0" y="0" width="61" height="10" fill="#c1f0c8"/><rect x="0" y="9" width="61" height="10" fill="#84e291"/><rect x="0" y="18" width="61" height="10" fill="#c1f0c8"/><rect x="0" y="27" width="61" height="10" fill="#84e291"/><rect x="0" y="36" width="61" height="10" fill="#c1f0c8"/><rect x="0" y="0" width="61" height="1" fill="#47d359"/><rect x="0" y="9" width="61" height="1" fill="#47d359"/><rect x="0" y="18" width="61" height="1" fill="#47d359"/><rect x="0" y="27" width="61" height="1" fill="#47d359"/><rect x="0" y="36" width="61" height="1" fill="#47d359"/><rect x="0" y="45" width="61" height="1" fill="#47d359"/><rect x="0" y="0" width="1" height="46" fill="#47d359"/><rect x="12" y="0" width="1" height="46" fill="#47d359"/><rect x="24" y="0" width="1" height="46" fill="#47d359"/><rect x="36" y="0" width="1" height="46" fill="#47d359"/><rect x="48" y="0" width="1" height="46" fill="#47d359"/><rect x="60" y="0" width="1" height="46" fill="#47d359"/><path d="M3 4.5H58" stroke="#000" stroke-width="1.6" stroke-dasharray="7 5" shape-rendering="auto"/><path d="M3 13.5H58" stroke="#000" stroke-width="1.6" stroke-dasharray="7 5" shape-rendering="auto"/><path d="M3 22.5H58" stroke="#000" stroke-width="1.6" stroke-dasharray="7 5" shape-rendering="auto"/><path d="M3 31.5H58" stroke="#000" stroke-width="1.6" stroke-dasharray="7 5" shape-rendering="auto"/><path d="M3 40.5H58" stroke="#000" stroke-width="1.6" stroke-dasharray="7 5" shape-rendering="auto"/></svg>
<svg style="left:943px;top:530px;background:#fff" width="61" height="46" viewBox="0 0 61 46" shape-rendering="crispEdges"><rect x="0" y="0" width="61" height="10" fill="#caedfb"/><rect x="0" y="9" width="61" height="10" fill="#94dcf8"/><rect x="0" y="18" width="61" height="10" fill="#caedfb"/><rect x="0" y="27" width="61" height="10" fill="#94dcf8"/><rect x="0" y="36" width="61" height="10" fill="#caedfb"/><rect x="0" y="0" width="61" height="1" fill="#61cbf3"/><rect x="0" y="9" width="61" height="1" fill="#61cbf3"/><rect x="0" y="18" width="61" height="1" fill="#61cbf3"/><rect x="0" y="27" width="61" height="1" fill="#61cbf3"/><rect x="0" y="36" width="61" height="1" fill="#61cbf3"/><rect x="0" y="45" width="61" height="1" fill="#61cbf3"/><rect x="0" y="0" width="1" height="46" fill="#61cbf3"/><rect x="12" y="0" width="1" height="46" fill="#61cbf3"/><rect x="24" y="0" width="1" height="46" fill="#61cbf3"/><rect x="36" y="0" width="1" height="46" fill="#61cbf3"/><rect x="48" y="0" width="1" height="46" fill="#61cbf3"/><rect x="60" y="0" width="1" height="46" fill="#61cbf3"/><path d="M3 4.5H58" stroke="#000" stroke-width="1.6" stroke-dasharray="7 5" shape-rendering="auto"/><path d="M3 13.5H58" stroke="#000" stroke-width="1.6" stroke-dasharray="7 5" shape-rendering="auto"/><path d="M3 22.5H58" stroke="#000" stroke-width="1.6" stroke-dasharray="7 5" shape-rendering="auto"/><path d="M3 31.5H58" stroke="#000" stroke-width="1.6" stroke-dasharray="7 5" shape-rendering="auto"/><path d="M3 40.5H58" stroke="#000" stroke-width="1.6" stroke-dasharray="7 5" shape-rendering="auto"/></svg>
<svg style="left:1012px;top:530px;background:#fff" width="61" height="46" viewBox="0 0 61 46" shape-rendering="crispEdges"><rect x="0" y="0" width="61" height="10" fill="#f2ceef"/><rect x="0" y="9" width="61" height="10" fill="#e49edd"/><rect x="0" y="18" width="61" height="10" fill="#f2ceef"/><rect x="0" y="27" width="61" height="10" fill="#e49edd"/><rect x="0" y="36" width="61" height="10" fill="#f2ceef"/><rect x="0" y="0" width="61" height="1" fill="#d86dcd"/><rect x="0" y="9" width="61" height="1" fill="#d86dcd"/><rect x="0" y="18" width="61" height="1" fill="#d86dcd"/><rect x="0" y="27" width="61" height="1" fill="#d86dcd"/><rect x="0" y="36" width="61" height="1" fill="#d86dcd"/><rect x="0" y="45" width="61" height="1" fill="#d86dcd"/><rect x="0" y="0" width="1" height="46" fill="#d86dcd"/><rect x="12" y="0" width="1" height="46" fill="#d86dcd"/><rect x="24" y="0" width="1" height="46" fill="#d86dcd"/><rect x="36" y="0" width="1" height="46" fill="#d86dcd"/><rect x="48" y="0" width="1" height="46" fill="#d86dcd"/><rect x="60" y="0" width="1" height="46" fill="#d86dcd"/><path d="M3 4.5H58" stroke="#000" stroke-width="1.6" stroke-dasharray="7 5" shape-rendering="auto"/><path d="M3 13.5H58" stroke="#000" stroke-width="1.6" stroke-dasharray="7 5" shape-rendering="auto"/><path d="M3 22.5H58" stroke="#000" stroke-width="1.6" stroke-dasharray="7 5" shape-rendering="auto"/><path d="M3 31.5H58" stroke="#000" stroke-width="1.6" stroke-dasharray="7 5" shape-rendering="auto"/><path d="M3 40.5H58" stroke="#000" stroke-width="1.6" stroke-dasharray="7 5" shape-rendering="auto"/></svg>
<svg style="left:1081px;top:530px;background:#fff" width="61" height="46" viewBox="0 0 61 46" shape-rendering="crispEdges"><rect x="0" y="0" width="61" height="10" fill="#d9f2d0"/><rect x="0" y="9" width="61" height="10" fill="#b3e5a1"/><rect x="0" y="18" width="61" height="10" fill="#d9f2d0"/><rect x="0" y="27" width="61" height="10" fill="#b3e5a1"/><rect x="0" y="36" width="61" height="10" fill="#d9f2d0"/><rect x="0" y="0" width="61" height="1" fill="#8ed973"/><rect x="0" y="9" width="61" height="1" fill="#8ed973"/><rect x="0" y="18" width="61" height="1" fill="#8ed973"/><rect x="0" y="27" width="61" height="1" fill="#8ed973"/><rect x="0" y="36" width="61" height="1" fill="#8ed973"/><rect x="0" y="45" width="61" height="1" fill="#8ed973"/><rect x="0" y="0" width="1" height="46" fill="#8ed973"/><rect x="12" y="0" width="1" height="46" fill="#8ed973"/><rect x="24" y="0" width="1" height="46" fill="#8ed973"/><rect x="36" y="0" width="1" height="46" fill="#8ed973"/><rect x="48" y="0" width="1" height="46" fill="#8ed973"/><rect x="60" y="0" width="1" height="46" fill="#8ed973"/><path d="M3 4.5H58" stroke="#000" stroke-width="1.6" stroke-dasharray="7 5" shape-rendering="auto"/><path d="M3 13.5H58" stroke="#000" stroke-width="1.6" stroke-dasharray="7 5" shape-rendering="auto"/><path d="M3 22.5H58" stroke="#000" stroke-width="1.6" stroke-dasharray="7 5" shape-rendering="auto"/><path d="M3 31.5H58" stroke="#000" stroke-width="1.6" stroke-dasharray="7 5" shape-rendering="auto"/><path d="M3 40.5H58" stroke="#000" stroke-width="1.6" stroke-dasharray="7 5" shape-rendering="auto"/></svg>
<svg style="left:667px;top:623px;background:#fff" width="61" height="46" viewBox="0 0 61 46" shape-rendering="crispEdges"><rect x="0" y="0" width="61" height="9" fill="#000"/><rect x="0" y="10" width="61" height="8" fill="#404040"/><rect x="0" y="18" width="61" height="9" fill="#737373"/><rect x="0" y="27" width="61" height="9" fill="#404040"/><rect x="0" y="36" width="61" height="9" fill="#737373"/><rect x="0" y="45" width="61" height="1" fill="#737373"/><path d="M3 4.5H58" stroke="#fff" stroke-width="1.5" stroke-dasharray="7 5" shape-rendering="auto"/><path d="M3 13.5H58" stroke="#fff" stroke-width="1.5" stroke-dasharray="7 5" shape-rendering="auto"/><path d="M3 22.5H58" stroke="#fff" stroke-width="1.5" stroke-dasharray="7 5" shape-rendering="auto"/><path d="M3 31.5H58" stroke="#fff" stroke-width="1.5" stroke-dasharray="7 5" shape-rendering="auto"/><path d="M3 40.5H58" stroke="#fff" stroke-width="1.5" stroke-dasharray="7 5" shape-rendering="auto"/></svg>
<svg style="left:736px;top:623px;background:#fff" width="61" height="46" viewBox="0 0 61 46" shape-rendering="crispEdges"><rect x="0" y="0" width="61" height="9" fill="#000"/><rect x="0" y="10" width="61" height="8" fill="#104862"/><rect x="0" y="18" width="61" height="9" fill="#156082"/><rect x="0" y="27" width="61" height="9" fill="#104862"/><rect x="0" y="36" width="61" height="9" fill="#156082"/><rect x="0" y="45" width="61" height="1" fill="#156082"/><path d="M3 4.5H58" stroke="#fff" stroke-width="1.5" stroke-dasharray="7 5" shape-rendering="auto"/><path d="M3 13.5H58" stroke="#fff" stroke-width="1.5" stroke-dasharray="7 5" shape-rendering="auto"/><path d="M3 22.5H58" stroke="#fff" stroke-width="1.5" stroke-dasharray="7 5" shape-rendering="auto"/><path d="M3 31.5H58" stroke="#fff" stroke-width="1.5" stroke-dasharray="7 5" shape-rendering="auto"/><path d="M3 40.5H58" stroke="#fff" stroke-width="1.5" stroke-dasharray="7 5" shape-rendering="auto"/></svg>
<svg style="left:805px;top:623px;background:#fff" width="61" height="46" viewBox="0 0 61 46" shape-rendering="crispEdges"><rect x="0" y="0" width="61" height="9" fill="#000"/><rect x="0" y="10" width="61" height="8" fill="#c04f15"/><rect x="0" y="18" width="61" height="9" fill="#e97132"/><rect x="0" y="27" width="61" height="9" fill="#c04f15"/><rect x="0" y="36" width="61" height="9" fill="#e97132"/><rect x="0" y="45" width="61" height="1" fill="#e97132"/><path d="M3 4.5H58" stroke="#fff" stroke-width="1.5" stroke-dasharray="7 5" shape-rendering="auto"/><path d="M3 13.5H58" stroke="#fff" stroke-width="1.5" stroke-dasharray="7 5" shape-rendering="auto"/><path d="M3 22.5H58" stroke="#fff" stroke-width="1.5" stroke-dasharray="7 5" shape-rendering="auto"/><path d="M3 31.5H58" stroke="#fff" stroke-width="1.5" stroke-dasharray="7 5" shape-rendering="auto"/><path d="M3 40.5H58" stroke="#fff" stroke-width="1.5" stroke-dasharray="7 5" shape-rendering="auto"/></svg>
<svg style="left:874px;top:623px;background:#fff" width="61" height="46" viewBox="0 0 61 46" shape-rendering="crispEdges"><rect x="0" y="0" width="61" height="9" fill="#000"/><rect x="0" y="10" width="61" height="8" fill="#13501b"/><rect x="0" y="18" width="61" height="9" fill="#196b24"/><rect x="0" y="27" width="61" height="9" fill="#13501b"/><rect x="0" y="36" width="61" height="9" fill="#196b24"/><rect x="0" y="45" width="61" height="1" fill="#196b24"/><path d="M3 4.5H58" stroke="#fff" stroke-width="1.5" stroke-dasharray="7 5" shape-rendering="auto"/><path d="M3 13.5H58" stroke="#fff" stroke-width="1.5" stroke-dasharray="7 5" shape-rendering="auto"/><path d="M3 22.5H58" stroke="#fff" stroke-width="1.5" stroke-dasharray="7 5" shape-rendering="auto"/><path d="M3 31.5H58" stroke="#fff" stroke-width="1.5" stroke-dasharray="7 5" shape-rendering="auto"/><path d="M3 40.5H58" stroke="#fff" stroke-width="1.5" stroke-dasharray="7 5" shape-rendering="auto"/></svg>
<svg style="left:943px;top:623px;background:#fff" width="61" height="46" viewBox="0 0 61 46" shape-rendering="crispEdges"><rect x="0" y="0" width="61" height="9" fill="#000"/><rect x="0" y="10" width="61" height="8" fill="#0b769f"/><rect x="0" y="18" width="61" height="9" fill="#0f9ed5"/><rect x="0" y="27" width="61" height="9" fill="#0b769f"/><rect x="0" y="36" width="61" height="9" fill="#0f9ed5"/><rect x="0" y="45" width="61" height="1" fill="#0f9ed5"/><path d="M3 4.5H58" stroke="#fff" stroke-width="1.5" stroke-dasharray="7 5" shape-rendering="auto"/><path d="M3 13.5H58" stroke="#fff" stroke-width="1.5" stroke-dasharray="7 5" shape-rendering="auto"/><path d="M3 22.5H58" stroke="#fff" stroke-width="1.5" stroke-dasharray="7 5" shape-rendering="auto"/><path d="M3 31.5H58" stroke="#fff" stroke-width="1.5" stroke-dasharray="7 5" shape-rendering="auto"/><path d="M3 40.5H58" stroke="#fff" stroke-width="1.5" stroke-dasharray="7 5" shape-rendering="auto"/></svg>
<svg style="left:1012px;top:623px;background:#fff" width="61" height="46" viewBox="0 0 61 46" shape-rendering="crispEdges"><rect x="0" y="0" width="61" height="9" fill="#000"/><rect x="0" y="10" width="61" height="8" fill="#78206e"/><rect x="0" y="18" width="61" height="9" fill="#a02b93"/><rect x="0" y="27" width="61" height="9" fill="#78206e"/><rect x="0" y="36" width="61" height="9" fill="#a02b93"/><rect x="0" y="45" width="61" height="1" fill="#a02b93"/><path d="M3 4.5H58" stroke="#fff" stroke-width="1.5" stroke-dasharray="7 5" shape-rendering="auto"/><path d="M3 13.5H58" stroke="#fff" stroke-width="1.5" stroke-dasharray="7 5" shape-rendering="auto"/><path d="M3 22.5H58" stroke="#fff" stroke-width="1.5" stroke-dasharray="7 5" shape-rendering="auto"/><path d="M3 31.5H58" stroke="#fff" stroke-width="1.5" stroke-dasharray="7 5" shape-rendering="auto"/><path d="M3 40.5H58" stroke="#fff" stroke-width="1.5" stroke-dasharray="7 5" shape-rendering="auto"/></svg>
<svg style="left:1081px;top:623px;background:#fff" width="61" height="46" viewBox="0 0 61 46" shape-rendering="crispEdges"><rect x="0" y="0" width="61" height="9" fill="#000"/><rect x="0" y="10" width="61" height="8" fill="#3b7d23"/><rect x="0" y="18" width="61" height="9" fill="#4ea72e"/><rect x="0" y="27" width="61" height="9" fill="#3b7d23"/><rect x="0" y="36" width="61" height="9" fill="#4ea72e"/><rect x="0" y="45" width="61" height="1" fill="#4ea72e"/><path d="M3 4.5H58" stroke="#fff" stroke-width="1.5" stroke-dasharray="7 5" shape-rendering="auto"/><path d="M3 13.5H58" stroke="#fff" stroke-width="1.5" stroke-dasharray="7 5" shape-rendering="auto"/><path d="M3 22.5H58" stroke="#fff" stroke-width="1.5" stroke-dasharray="7 5" shape-rendering="auto"/><path d="M3 31.5H58" stroke="#fff" stroke-width="1.5" stroke-dasharray="7 5" shape-rendering="auto"/><path d="M3 40.5H58" stroke="#fff" stroke-width="1.5" stroke-dasharray="7 5" shape-rendering="auto"/></svg>
<svg style="left:667px;top:677px;background:#fff" width="61" height="46" viewBox="0 0 61 46" shape-rendering="crispEdges"><rect x="0" y="0" width="61" height="10" fill="#000"/><rect x="0" y="10" width="61" height="9" fill="#a6a6a6"/><rect x="0" y="18" width="61" height="9" fill="#d9d9d9"/><rect x="0" y="27" width="61" height="9" fill="#a6a6a6"/><rect x="0" y="36" width="61" height="9" fill="#d9d9d9"/><rect x="0" y="45" width="61" height="1" fill="#d9d9d9"/><path d="M3 4.5H58" stroke="#fff" stroke-width="1.5" stroke-dasharray="7 5" shape-rendering="auto"/><path d="M3 13.5H58" stroke="#000" stroke-width="1.3" stroke-dasharray="7 5" shape-rendering="auto"/><path d="M3 22.5H58" stroke="#000" stroke-width="1.3" stroke-dasharray="7 5" shape-rendering="auto"/><path d="M3 31.5H58" stroke="#000" stroke-width="1.3" stroke-dasharray="7 5" shape-rendering="auto"/><path d="M3 40.5H58" stroke="#000" stroke-width="1.3" stroke-dasharray="7 5" shape-rendering="auto"/></svg>
<svg style="left:736px;top:677px;background:#fff" width="61" height="46" viewBox="0 0 61 46" shape-rendering="crispEdges"><rect x="0" y="0" width="61" height="10" fill="#e97132"/><rect x="0" y="10" width="61" height="9" fill="#83cceb"/><rect x="0" y="18" width="61" height="9" fill="#c0e6f5"/><rect x="0" y="27" width="61" height="9" fill="#83cceb"/><rect x="0" y="36" width="61" height="9" fill="#c0e6f5"/><rect x="0" y="45" width="61" height="1" fill="#c0e6f5"/><path d="M3 4.5H58" stroke="#fff" stroke-width="1.5" stroke-dasharray="7 5" shape-rendering="auto"/><path d="M3 13.5H58" stroke="#000" stroke-width="1.3" stroke-dasharray="7 5" shape-rendering="auto"/><path d="M3 22.5H58" stroke="#000" stroke-width="1.3" stroke-dasharray="7 5" shape-rendering="auto"/><path d="M3 31.5H58" stroke="#000" stroke-width="1.3" stroke-dasharray="7 5" shape-rendering="auto"/><path d="M3 40.5H58" stroke="#000" stroke-width="1.3" stroke-dasharray="7 5" shape-rendering="auto"/></svg>
<svg style="left:805px;top:677px;background:#fff" width="61" height="46" viewBox="0 0 61 46" shape-rendering="crispEdges"><rect x="0" y="0" width="61" height="10" fill="#0f9ed5"/><rect x="0" y="10" width="61" height="9" fill="#84e291"/><rect x="0" y="18" width="61" height="9" fill="#c1f0c8"/><rect x="0" y="27" width="61" height="9" fill="#84e291"/><rect x="0" y="36" width="61" height="9" fill="#c1f0c8"/><rect x="0" y="45" width="61" height="1" fill="#c1f0c8"/><path d="M3 4.5H58" stroke="#fff" stroke-width="1.5" stroke-dasharray="7 5" shape-rendering="auto"/><path d="M3 13.5H58" stroke="#000" stroke-width="1.3" stroke-dasharray="7 5" shape-rendering="auto"/><path d="M3 22.5H58" stroke="#000" stroke-width="1.3" stroke-dasharray="7 5" shape-rendering="auto"/><path d="M3 31.5H58" stroke="#000" stroke-width="1.3" stroke-dasharray="7 5" shape-rendering="auto"/><path d="M3 40.5H58" stroke="#000" stroke-width="1.3" stroke-dasharray="7 5" shape-rendering="auto"/></svg>
<svg style="left:874px;top:677px;background:#fff" width="61" height="46" viewBox="0 0 61 46" shape-rendering="crispEdges"><rect x="0" y="0" width="61" height="10" fill="#4ea72e"/><rect x="0" y="10" width="61" height="9" fill="#e49edd"/><rect x="0" y="18" width="61" height="9" fill="#f2ceef"/><rect x="0" y="27" width="61" height="9" fill="#e49edd"/><rect x="0" y="36" width="61" height="9" fill="#f2ceef"/><rect x="0" y="45" width="61" height="1" fill="#f2ceef"/><path d="M3 4.5H58" stroke="#fff" stroke-width="1.5" stroke-dasharray="7 5" shape-rendering="auto"/><path d="M3 13.5H58" stroke="#000" stroke-width="1.3" stroke-dasharray="7 5" shape-rendering="auto"/><path d="M3 22.5H58" stroke="#000" stroke-width="1.3" stroke-dasharray="7 5" shape-rendering="auto"/><path d="M3 31.5H58" stroke="#000" stroke-width="1.3" stroke-dasharray="7 5" shape-rendering="auto"/><path d="M3 40.5H58" stroke="#000" stroke-width="1.3" stroke-dasharray="7 5" shape-rendering="auto"/></svg><svg style="left:675px;top:743px" width="17" height="16" viewBox="0 0 17 16"><rect x="5.3" y="1.4" width="10.7" height="13.2" fill="#4f9fe8"/><path d="M10.7 1.4V14.6M5.3 5.7H16M5.3 10.2H16" fill="none" stroke="#9ccbf5" stroke-width="0.9" /><path d="M0.4 6.6V14.6H16V1.4H6.6 M5.3 6.6V14.6 M0.4 10.5H5.3" fill="none" stroke="#3b3b3b" stroke-width="0.9" /><path d="M3.5 0V6.4 M0.3 3.5H6.3" fill="none" stroke="#2e9a4a" stroke-width="1.2" /></svg><div class="rt" style="left:700px;top:746.4px;font-size:12px;letter-spacing:-0.243px;"><u>N</u>ew Table Style...</div><svg style="left:675px;top:771px" width="17" height="17" viewBox="0 0 17 17"><path d="M0.4 6.2V15.4H16V0.6H7" fill="none" stroke="#3b3b3b" stroke-width="0.9" /><rect x="7.7" y="2.3" width="6.2" height="1.8" fill="#e6e6e6" stroke="#8a8a8a" stroke-width="0.7"/><rect x="2.4" y="8.5" width="2" height="5" fill="#e6e6e6" stroke="#8a8a8a" stroke-width="0.7"/><path d="M13.3 7.5V12.8H7.8 M11.6 9L13.3 7.3L15 9 M9.3 11.2L7.6 12.8L9.3 14.4" fill="none" stroke="#3b8ee0" stroke-width="1" stroke-linejoin="round"/><path d="M3.5 0.3V6.6 M0.3 3.5H6.3" fill="none" stroke="#2e9a4a" stroke-width="1.2" /></svg><div class="rt" style="left:700px;top:774.4px;font-size:12px;letter-spacing:-0.169px;">New <u>P</u>ivotTable Style...</div><div class="abs" style="left:834px;top:408px;width:164px;height:23px;border:1px solid #a6a6a6;border-radius:4px;background:#fff;box-shadow:0 2px 5px rgba(0,0,0,.16)"></div><div class="rt" style="left:839.8px;top:414px;font-size:12px;letter-spacing:-0.281px;color:#5a5a5a;">Orange, Table Style Medium 3</div><div class="red" style="left:661px;top:135px;width:505px;height:663px"></div><div class="red" style="left:656px;top:107px;width:134px;height:31px"></div><div class="red" style="left:55px;top:50px;width:65px;height:35px;border-width:4px"></div>
<div id="frame"></div>
</div></body></html>
